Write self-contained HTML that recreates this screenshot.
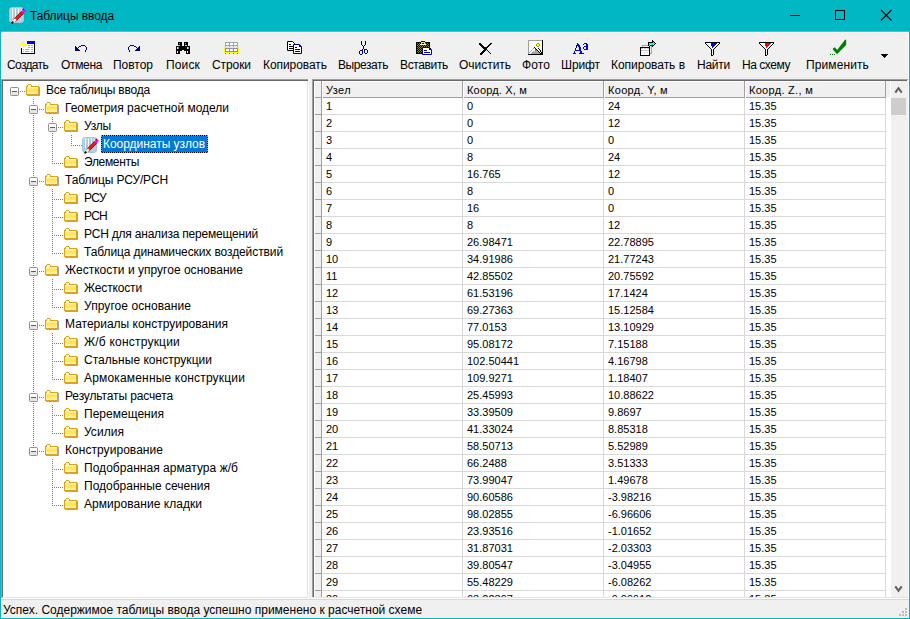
<!DOCTYPE html><html><head><meta charset="utf-8"><style>
*{margin:0;padding:0;box-sizing:border-box}
html,body{width:910px;height:619px;overflow:hidden;background:#F0F0F0;font-family:"Liberation Sans", sans-serif;position:relative}
.a{position:absolute}
.t{position:absolute;white-space:pre;color:#000}
.dh{position:absolute;height:1px;background:repeating-linear-gradient(to right,#7A7A7A 0 1px,transparent 1px 2px)}
.dv{position:absolute;width:1px;background:repeating-linear-gradient(to bottom,#7A7A7A 0 1px,transparent 1px 2px)}
</style></head><body>
<div class="a" style="left:0;top:0;width:910px;height:31px;background:#00B7C3"></div>
<div class="a" style="left:0;top:0;width:1px;height:619px;background:#00B7C3"></div>
<div class="a" style="left:909px;top:0;width:1px;height:619px;background:#00B7C3"></div>
<div class="a" style="left:0;top:618px;width:910px;height:1px;background:#00B7C3"></div>
<svg class="a" style="left:9px;top:7px" width="18" height="17"><rect x="0.5" y="0.5" width="14" height="15" rx="2.5" fill="#B0D2E5" stroke="#9FC6DB"/><path d="M1 2.5Q1 1 2.5 1H12L1 12Z" fill="#D2E7F2" opacity="0.7"/><path d="M3.5 1.5v10M6.5 1.5v10M9.5 1.5v10M12 1.5v8" stroke="#F4FAFD" stroke-width="1.1"/><path d="M2.2 2v10M5 1.5v10M8 1.5v10M11 1.5v9" stroke="#86B3CD" stroke-width="0.8"/><path d="M5.5 13.5 L13.8 5.2" stroke="#700000" stroke-width="3.4"/><path d="M5.5 13.5 L13.8 5.2" stroke="#FF1818" stroke-width="2.1"/><path d="M4.2 14.8 L6.8 12.2" stroke="#EDEDED" stroke-width="2.6"/><path d="M13.5 5.5 L16 3" stroke="#FF00FF" stroke-width="2.8"/><path d="M13.6 3 L14.8 1.8" stroke="#A00000" stroke-width="1.4"/><path d="M2.6 16.4 L4.4 14.6" stroke="#000" stroke-width="1.5"/></svg>
<div class="a" style="left:790px;top:15px;width:10px;height:1px;background:#000"></div>
<div class="a" style="left:835px;top:10px;width:10px;height:10px;border:1px solid #000"></div>
<svg class="a" style="left:880px;top:9px" width="13" height="13" viewBox="0 0 13 13"><path d="M1 1L11.5 11.5M11.5 1L1 11.5" stroke="#000" stroke-width="1.1"/></svg>
<div class="a" style="left:1px;top:31px;width:908px;height:1px;background:#A0A0A0"></div>
<div class="a" style="left:1px;top:32px;width:908px;height:1px;background:#FFF"></div>
<div class="a" style="left:1px;top:32px;width:1px;height:47px;background:#FFF"></div>
<div class="a" style="left:908px;top:32px;width:1px;height:47px;background:#FFF"></div>
<svg class="a" style="left:0;top:0" width="910" height="80" viewBox="0 0 910 80"><rect x="21" y="44" width="13" height="9" fill="#FFFFFF" shape-rendering="crispEdges"/><rect x="27" y="41" width="8" height="3" fill="#0000FF" shape-rendering="crispEdges"/><rect x="34" y="44" width="1" height="10" fill="#000" shape-rendering="crispEdges"/><rect x="21" y="53" width="14" height="1" fill="#000" shape-rendering="crispEdges"/><rect x="21" y="48" width="1" height="6" fill="#000" shape-rendering="crispEdges"/><rect x="28" y="45" width="2" height="1" fill="#A8A8A8" shape-rendering="crispEdges"/><rect x="31" y="45" width="2" height="1" fill="#A8A8A8" shape-rendering="crispEdges"/><rect x="28" y="47" width="2" height="1" fill="#A8A8A8" shape-rendering="crispEdges"/><rect x="31" y="47" width="2" height="1" fill="#A8A8A8" shape-rendering="crispEdges"/><rect x="23" y="49" width="1" height="1" fill="#A8A8A8" shape-rendering="crispEdges"/><rect x="25" y="49" width="4" height="1" fill="#A8A8A8" shape-rendering="crispEdges"/><rect x="31" y="49" width="2" height="1" fill="#A8A8A8" shape-rendering="crispEdges"/><rect x="23" y="51" width="1" height="1" fill="#A8A8A8" shape-rendering="crispEdges"/><rect x="25" y="51" width="4" height="1" fill="#A8A8A8" shape-rendering="crispEdges"/><rect x="31" y="51" width="2" height="1" fill="#A8A8A8" shape-rendering="crispEdges"/><rect x="23" y="41" width="1" height="1" fill="#FFFF00" shape-rendering="crispEdges"/><rect x="23" y="42" width="1" height="1" fill="#FFFF00" shape-rendering="crispEdges"/><rect x="23" y="46" width="1" height="1" fill="#FFFF00" shape-rendering="crispEdges"/><rect x="23" y="47" width="1" height="1" fill="#FFFF00" shape-rendering="crispEdges"/><rect x="20" y="44" width="1" height="1" fill="#FFFF00" shape-rendering="crispEdges"/><rect x="21" y="44" width="1" height="1" fill="#FFFF00" shape-rendering="crispEdges"/><rect x="25" y="44" width="1" height="1" fill="#FFFF00" shape-rendering="crispEdges"/><rect x="26" y="44" width="1" height="1" fill="#FFFF00" shape-rendering="crispEdges"/><rect x="21" y="42" width="1" height="1" fill="#FFFF00" shape-rendering="crispEdges"/><rect x="25" y="42" width="1" height="1" fill="#FFFF00" shape-rendering="crispEdges"/><rect x="21" y="46" width="1" height="1" fill="#FFFF00" shape-rendering="crispEdges"/><rect x="25" y="46" width="1" height="1" fill="#FFFF00" shape-rendering="crispEdges"/><rect x="22" y="43" width="3" height="3" fill="#FFFF00" shape-rendering="crispEdges"/><rect x="23" y="44" width="1" height="1" fill="#FFFFFF" shape-rendering="crispEdges"/><rect x="75" y="46" width="1" height="1" fill="#000080" shape-rendering="crispEdges"/><rect x="75" y="47" width="2" height="1" fill="#000080" shape-rendering="crispEdges"/><rect x="75" y="48" width="3" height="1" fill="#000080" shape-rendering="crispEdges"/><rect x="75" y="49" width="4" height="1" fill="#000080" shape-rendering="crispEdges"/><rect x="75" y="50" width="5" height="1" fill="#000080" shape-rendering="crispEdges"/><rect x="78" y="47" width="1" height="1" fill="#000080" shape-rendering="crispEdges"/><rect x="79" y="46" width="1" height="1" fill="#000080" shape-rendering="crispEdges"/><rect x="80" y="46" width="1" height="1" fill="#000080" shape-rendering="crispEdges"/><rect x="81" y="45" width="1" height="1" fill="#000080" shape-rendering="crispEdges"/><rect x="82" y="45" width="1" height="1" fill="#000080" shape-rendering="crispEdges"/><rect x="83" y="45" width="1" height="1" fill="#000080" shape-rendering="crispEdges"/><rect x="84" y="45" width="1" height="1" fill="#000080" shape-rendering="crispEdges"/><rect x="85" y="46" width="1" height="1" fill="#000080" shape-rendering="crispEdges"/><rect x="86" y="47" width="1" height="1" fill="#000080" shape-rendering="crispEdges"/><rect x="86" y="48" width="1" height="1" fill="#000080" shape-rendering="crispEdges"/><rect x="86" y="49" width="1" height="1" fill="#000080" shape-rendering="crispEdges"/><rect x="85" y="50" width="1" height="1" fill="#000080" shape-rendering="crispEdges"/><rect x="85" y="51" width="1" height="1" fill="#000080" shape-rendering="crispEdges"/><rect x="139" y="46" width="1" height="1" fill="#000080" shape-rendering="crispEdges"/><rect x="138" y="47" width="2" height="1" fill="#000080" shape-rendering="crispEdges"/><rect x="137" y="48" width="3" height="1" fill="#000080" shape-rendering="crispEdges"/><rect x="136" y="49" width="4" height="1" fill="#000080" shape-rendering="crispEdges"/><rect x="135" y="50" width="5" height="1" fill="#000080" shape-rendering="crispEdges"/><rect x="136" y="47" width="1" height="1" fill="#000080" shape-rendering="crispEdges"/><rect x="135" y="46" width="1" height="1" fill="#000080" shape-rendering="crispEdges"/><rect x="134" y="46" width="1" height="1" fill="#000080" shape-rendering="crispEdges"/><rect x="133" y="45" width="1" height="1" fill="#000080" shape-rendering="crispEdges"/><rect x="132" y="45" width="1" height="1" fill="#000080" shape-rendering="crispEdges"/><rect x="131" y="45" width="1" height="1" fill="#000080" shape-rendering="crispEdges"/><rect x="130" y="45" width="1" height="1" fill="#000080" shape-rendering="crispEdges"/><rect x="129" y="46" width="1" height="1" fill="#000080" shape-rendering="crispEdges"/><rect x="128" y="47" width="1" height="1" fill="#000080" shape-rendering="crispEdges"/><rect x="128" y="48" width="1" height="1" fill="#000080" shape-rendering="crispEdges"/><rect x="128" y="49" width="1" height="1" fill="#000080" shape-rendering="crispEdges"/><rect x="129" y="50" width="1" height="1" fill="#000080" shape-rendering="crispEdges"/><rect x="129" y="51" width="1" height="1" fill="#000080" shape-rendering="crispEdges"/><rect x="178" y="42" width="4" height="4" fill="#000" shape-rendering="crispEdges"/><rect x="184" y="42" width="4" height="4" fill="#000" shape-rendering="crispEdges"/><rect x="176" y="46" width="14" height="4" fill="#000" shape-rendering="crispEdges"/><rect x="176" y="50" width="4" height="4" fill="#000" shape-rendering="crispEdges"/><rect x="186" y="50" width="4" height="4" fill="#000" shape-rendering="crispEdges"/><rect x="180" y="50" width="6" height="1" fill="#000" shape-rendering="crispEdges"/><rect x="179" y="43" width="1" height="1" fill="#909090" shape-rendering="crispEdges"/><rect x="185" y="43" width="1" height="1" fill="#909090" shape-rendering="crispEdges"/><rect x="178" y="45" width="2" height="1" fill="#D8D8D8" shape-rendering="crispEdges"/><rect x="185" y="45" width="2" height="1" fill="#D8D8D8" shape-rendering="crispEdges"/><rect x="177" y="47" width="1" height="2" fill="#FFFFFF" shape-rendering="crispEdges"/><rect x="178" y="47" width="1" height="2" fill="#808080" shape-rendering="crispEdges"/><rect x="177" y="51" width="1" height="2" fill="#FFFFFF" shape-rendering="crispEdges"/><rect x="187" y="47" width="1" height="2" fill="#FFFFFF" shape-rendering="crispEdges"/><rect x="188" y="47" width="1" height="2" fill="#808080" shape-rendering="crispEdges"/><rect x="187" y="51" width="1" height="2" fill="#FFFFFF" shape-rendering="crispEdges"/><rect x="182" y="50" width="2" height="1" fill="#F0F0F0" shape-rendering="crispEdges"/><rect x="225" y="42" width="13" height="4" fill="#A4A4A4" shape-rendering="crispEdges"/><rect x="226" y="43" width="3" height="2" fill="#FFF" shape-rendering="crispEdges"/><rect x="230" y="43" width="3" height="2" fill="#FFF" shape-rendering="crispEdges"/><rect x="234" y="43" width="3" height="2" fill="#FFF" shape-rendering="crispEdges"/><rect x="225" y="46" width="1" height="1" fill="#A4A4A4" shape-rendering="crispEdges"/><rect x="229" y="46" width="1" height="1" fill="#A4A4A4" shape-rendering="crispEdges"/><rect x="233" y="46" width="1" height="1" fill="#A4A4A4" shape-rendering="crispEdges"/><rect x="237" y="46" width="1" height="1" fill="#A4A4A4" shape-rendering="crispEdges"/><rect x="224" y="47" width="15" height="6" fill="#FFFF00" shape-rendering="crispEdges"/><rect x="225" y="48" width="13" height="4" fill="#8C8CB4" shape-rendering="crispEdges"/><rect x="226" y="49" width="3" height="2" fill="#FFF" shape-rendering="crispEdges"/><rect x="230" y="49" width="3" height="2" fill="#FFF" shape-rendering="crispEdges"/><rect x="234" y="49" width="3" height="2" fill="#FFF" shape-rendering="crispEdges"/><rect x="225" y="53" width="1" height="1" fill="#707070" shape-rendering="crispEdges"/><rect x="229" y="53" width="1" height="1" fill="#707070" shape-rendering="crispEdges"/><rect x="233" y="53" width="1" height="1" fill="#707070" shape-rendering="crispEdges"/><rect x="237" y="53" width="1" height="1" fill="#707070" shape-rendering="crispEdges"/><path d="M287.5 41.5H292.5L294.5 43.5V50.5H287.5Z" fill="#FFF" stroke="#000"/><rect x="289" y="44" width="2" height="1" fill="#000" shape-rendering="crispEdges"/><rect x="289" y="46" width="4" height="1" fill="#000" shape-rendering="crispEdges"/><rect x="289" y="48" width="4" height="1" fill="#000" shape-rendering="crispEdges"/><path d="M293.5 44.5H299.5L301.5 46.5V53.5H293.5Z" fill="#FFF" stroke="#000080"/><rect x="299" y="45" width="1" height="2" fill="#000080" shape-rendering="crispEdges"/><rect x="300" y="46" width="1" height="1" fill="#000080" shape-rendering="crispEdges"/><rect x="295" y="47" width="2" height="1" fill="#000080" shape-rendering="crispEdges"/><rect x="295" y="49" width="5" height="1" fill="#000080" shape-rendering="crispEdges"/><rect x="295" y="51" width="5" height="1" fill="#000080" shape-rendering="crispEdges"/><rect x="361" y="41" width="1" height="1" fill="#000" shape-rendering="crispEdges"/><rect x="361" y="42" width="1" height="1" fill="#000" shape-rendering="crispEdges"/><rect x="361" y="43" width="1" height="1" fill="#000" shape-rendering="crispEdges"/><rect x="361" y="44" width="1" height="1" fill="#000" shape-rendering="crispEdges"/><rect x="362" y="45" width="1" height="1" fill="#000" shape-rendering="crispEdges"/><rect x="363" y="46" width="1" height="1" fill="#000" shape-rendering="crispEdges"/><rect x="365" y="41" width="1" height="1" fill="#000" shape-rendering="crispEdges"/><rect x="365" y="42" width="1" height="1" fill="#000" shape-rendering="crispEdges"/><rect x="365" y="43" width="1" height="1" fill="#000" shape-rendering="crispEdges"/><rect x="365" y="44" width="1" height="1" fill="#000" shape-rendering="crispEdges"/><rect x="364" y="45" width="1" height="1" fill="#000" shape-rendering="crispEdges"/><rect x="363" y="47" width="1" height="1" fill="#000" shape-rendering="crispEdges"/><rect x="363" y="48" width="1" height="1" fill="#000" shape-rendering="crispEdges"/><rect x="359" y="51" width="1" height="1" fill="#000080" shape-rendering="crispEdges"/><rect x="359" y="52" width="1" height="1" fill="#000080" shape-rendering="crispEdges"/><rect x="359" y="53" width="1" height="1" fill="#000080" shape-rendering="crispEdges"/><rect x="360" y="50" width="1" height="1" fill="#000080" shape-rendering="crispEdges"/><rect x="361" y="50" width="1" height="1" fill="#000080" shape-rendering="crispEdges"/><rect x="360" y="54" width="1" height="1" fill="#000080" shape-rendering="crispEdges"/><rect x="361" y="54" width="1" height="1" fill="#000080" shape-rendering="crispEdges"/><rect x="362" y="50" width="1" height="1" fill="#000080" shape-rendering="crispEdges"/><rect x="362" y="51" width="1" height="1" fill="#000080" shape-rendering="crispEdges"/><rect x="362" y="52" width="1" height="1" fill="#000080" shape-rendering="crispEdges"/><rect x="362" y="53" width="1" height="1" fill="#000080" shape-rendering="crispEdges"/><rect x="362" y="49" width="1" height="1" fill="#000080" shape-rendering="crispEdges"/><rect x="364" y="49" width="1" height="1" fill="#000080" shape-rendering="crispEdges"/><rect x="364" y="50" width="1" height="1" fill="#000080" shape-rendering="crispEdges"/><rect x="364" y="51" width="1" height="1" fill="#000080" shape-rendering="crispEdges"/><rect x="364" y="52" width="1" height="1" fill="#000080" shape-rendering="crispEdges"/><rect x="365" y="49" width="1" height="1" fill="#000080" shape-rendering="crispEdges"/><rect x="366" y="49" width="1" height="1" fill="#000080" shape-rendering="crispEdges"/><rect x="367" y="50" width="1" height="1" fill="#000080" shape-rendering="crispEdges"/><rect x="367" y="51" width="1" height="1" fill="#000080" shape-rendering="crispEdges"/><rect x="367" y="52" width="1" height="1" fill="#000080" shape-rendering="crispEdges"/><rect x="365" y="53" width="1" height="1" fill="#000080" shape-rendering="crispEdges"/><rect x="366" y="53" width="1" height="1" fill="#000080" shape-rendering="crispEdges"/><rect x="416" y="42" width="14" height="12" fill="#000" shape-rendering="crispEdges"/><rect x="417" y="43" width="1" height="1" fill="#808000" shape-rendering="crispEdges"/><rect x="419" y="43" width="1" height="1" fill="#808000" shape-rendering="crispEdges"/><rect x="421" y="43" width="1" height="1" fill="#808000" shape-rendering="crispEdges"/><rect x="423" y="43" width="1" height="1" fill="#808000" shape-rendering="crispEdges"/><rect x="425" y="43" width="1" height="1" fill="#808000" shape-rendering="crispEdges"/><rect x="427" y="43" width="1" height="1" fill="#808000" shape-rendering="crispEdges"/><rect x="418" y="44" width="1" height="1" fill="#808000" shape-rendering="crispEdges"/><rect x="420" y="44" width="1" height="1" fill="#808000" shape-rendering="crispEdges"/><rect x="422" y="44" width="1" height="1" fill="#808000" shape-rendering="crispEdges"/><rect x="424" y="44" width="1" height="1" fill="#808000" shape-rendering="crispEdges"/><rect x="426" y="44" width="1" height="1" fill="#808000" shape-rendering="crispEdges"/><rect x="428" y="44" width="1" height="1" fill="#808000" shape-rendering="crispEdges"/><rect x="417" y="45" width="1" height="1" fill="#808000" shape-rendering="crispEdges"/><rect x="419" y="45" width="1" height="1" fill="#808000" shape-rendering="crispEdges"/><rect x="421" y="45" width="1" height="1" fill="#808000" shape-rendering="crispEdges"/><rect x="423" y="45" width="1" height="1" fill="#808000" shape-rendering="crispEdges"/><rect x="425" y="45" width="1" height="1" fill="#808000" shape-rendering="crispEdges"/><rect x="427" y="45" width="1" height="1" fill="#808000" shape-rendering="crispEdges"/><rect x="418" y="46" width="1" height="1" fill="#808000" shape-rendering="crispEdges"/><rect x="420" y="46" width="1" height="1" fill="#808000" shape-rendering="crispEdges"/><rect x="422" y="46" width="1" height="1" fill="#808000" shape-rendering="crispEdges"/><rect x="424" y="46" width="1" height="1" fill="#808000" shape-rendering="crispEdges"/><rect x="426" y="46" width="1" height="1" fill="#808000" shape-rendering="crispEdges"/><rect x="428" y="46" width="1" height="1" fill="#808000" shape-rendering="crispEdges"/><rect x="417" y="47" width="1" height="1" fill="#808000" shape-rendering="crispEdges"/><rect x="419" y="47" width="1" height="1" fill="#808000" shape-rendering="crispEdges"/><rect x="421" y="47" width="1" height="1" fill="#808000" shape-rendering="crispEdges"/><rect x="423" y="47" width="1" height="1" fill="#808000" shape-rendering="crispEdges"/><rect x="425" y="47" width="1" height="1" fill="#808000" shape-rendering="crispEdges"/><rect x="427" y="47" width="1" height="1" fill="#808000" shape-rendering="crispEdges"/><rect x="418" y="48" width="1" height="1" fill="#808000" shape-rendering="crispEdges"/><rect x="420" y="48" width="1" height="1" fill="#808000" shape-rendering="crispEdges"/><rect x="422" y="48" width="1" height="1" fill="#808000" shape-rendering="crispEdges"/><rect x="424" y="48" width="1" height="1" fill="#808000" shape-rendering="crispEdges"/><rect x="426" y="48" width="1" height="1" fill="#808000" shape-rendering="crispEdges"/><rect x="428" y="48" width="1" height="1" fill="#808000" shape-rendering="crispEdges"/><rect x="417" y="49" width="1" height="1" fill="#808000" shape-rendering="crispEdges"/><rect x="419" y="49" width="1" height="1" fill="#808000" shape-rendering="crispEdges"/><rect x="421" y="49" width="1" height="1" fill="#808000" shape-rendering="crispEdges"/><rect x="423" y="49" width="1" height="1" fill="#808000" shape-rendering="crispEdges"/><rect x="425" y="49" width="1" height="1" fill="#808000" shape-rendering="crispEdges"/><rect x="427" y="49" width="1" height="1" fill="#808000" shape-rendering="crispEdges"/><rect x="418" y="50" width="1" height="1" fill="#808000" shape-rendering="crispEdges"/><rect x="420" y="50" width="1" height="1" fill="#808000" shape-rendering="crispEdges"/><rect x="422" y="50" width="1" height="1" fill="#808000" shape-rendering="crispEdges"/><rect x="424" y="50" width="1" height="1" fill="#808000" shape-rendering="crispEdges"/><rect x="426" y="50" width="1" height="1" fill="#808000" shape-rendering="crispEdges"/><rect x="428" y="50" width="1" height="1" fill="#808000" shape-rendering="crispEdges"/><rect x="417" y="51" width="1" height="1" fill="#808000" shape-rendering="crispEdges"/><rect x="419" y="51" width="1" height="1" fill="#808000" shape-rendering="crispEdges"/><rect x="421" y="51" width="1" height="1" fill="#808000" shape-rendering="crispEdges"/><rect x="423" y="51" width="1" height="1" fill="#808000" shape-rendering="crispEdges"/><rect x="425" y="51" width="1" height="1" fill="#808000" shape-rendering="crispEdges"/><rect x="427" y="51" width="1" height="1" fill="#808000" shape-rendering="crispEdges"/><rect x="418" y="52" width="1" height="1" fill="#808000" shape-rendering="crispEdges"/><rect x="420" y="52" width="1" height="1" fill="#808000" shape-rendering="crispEdges"/><rect x="422" y="52" width="1" height="1" fill="#808000" shape-rendering="crispEdges"/><rect x="424" y="52" width="1" height="1" fill="#808000" shape-rendering="crispEdges"/><rect x="426" y="52" width="1" height="1" fill="#808000" shape-rendering="crispEdges"/><rect x="428" y="52" width="1" height="1" fill="#808000" shape-rendering="crispEdges"/><rect x="421" y="41" width="4" height="1" fill="#000" shape-rendering="crispEdges"/><rect x="421" y="42" width="4" height="2" fill="#FFFF00" shape-rendering="crispEdges"/><rect x="422" y="43" width="2" height="1" fill="#000" shape-rendering="crispEdges"/><rect x="420" y="44" width="6" height="1" fill="#FFFFFF" shape-rendering="crispEdges"/><path d="M422.5 47.5H429.5L431.5 49.5V54.5H422.5Z" fill="#FFF" stroke="#000080"/><rect x="429" y="48" width="1" height="2" fill="#000080" shape-rendering="crispEdges"/><rect x="430" y="49" width="1" height="1" fill="#000080" shape-rendering="crispEdges"/><rect x="424" y="50" width="3" height="1" fill="#000080" shape-rendering="crispEdges"/><rect x="424" y="52" width="6" height="1" fill="#000080" shape-rendering="crispEdges"/><rect x="479" y="43" width="1" height="1" fill="#000" shape-rendering="crispEdges"/><rect x="480" y="43" width="1" height="1" fill="#000" shape-rendering="crispEdges"/><rect x="490" y="43" width="1" height="1" fill="#000" shape-rendering="crispEdges"/><rect x="491" y="43" width="1" height="1" fill="#000" shape-rendering="crispEdges"/><rect x="479" y="44" width="1" height="1" fill="#000" shape-rendering="crispEdges"/><rect x="480" y="44" width="1" height="1" fill="#000" shape-rendering="crispEdges"/><rect x="481" y="44" width="1" height="1" fill="#000" shape-rendering="crispEdges"/><rect x="489" y="44" width="1" height="1" fill="#000" shape-rendering="crispEdges"/><rect x="490" y="44" width="1" height="1" fill="#000" shape-rendering="crispEdges"/><rect x="480" y="45" width="1" height="1" fill="#000" shape-rendering="crispEdges"/><rect x="481" y="45" width="1" height="1" fill="#000" shape-rendering="crispEdges"/><rect x="482" y="45" width="1" height="1" fill="#000" shape-rendering="crispEdges"/><rect x="488" y="45" width="1" height="1" fill="#000" shape-rendering="crispEdges"/><rect x="489" y="45" width="1" height="1" fill="#000" shape-rendering="crispEdges"/><rect x="481" y="46" width="1" height="1" fill="#000" shape-rendering="crispEdges"/><rect x="482" y="46" width="1" height="1" fill="#000" shape-rendering="crispEdges"/><rect x="483" y="46" width="1" height="1" fill="#000" shape-rendering="crispEdges"/><rect x="487" y="46" width="1" height="1" fill="#000" shape-rendering="crispEdges"/><rect x="488" y="46" width="1" height="1" fill="#000" shape-rendering="crispEdges"/><rect x="482" y="47" width="1" height="1" fill="#000" shape-rendering="crispEdges"/><rect x="483" y="47" width="1" height="1" fill="#000" shape-rendering="crispEdges"/><rect x="484" y="47" width="1" height="1" fill="#000" shape-rendering="crispEdges"/><rect x="485" y="47" width="1" height="1" fill="#000" shape-rendering="crispEdges"/><rect x="486" y="47" width="1" height="1" fill="#000" shape-rendering="crispEdges"/><rect x="487" y="47" width="1" height="1" fill="#000" shape-rendering="crispEdges"/><rect x="483" y="48" width="1" height="1" fill="#000" shape-rendering="crispEdges"/><rect x="484" y="48" width="1" height="1" fill="#000" shape-rendering="crispEdges"/><rect x="485" y="48" width="1" height="1" fill="#000" shape-rendering="crispEdges"/><rect x="486" y="48" width="1" height="1" fill="#000" shape-rendering="crispEdges"/><rect x="484" y="49" width="1" height="1" fill="#000" shape-rendering="crispEdges"/><rect x="485" y="49" width="1" height="1" fill="#000" shape-rendering="crispEdges"/><rect x="486" y="49" width="1" height="1" fill="#000" shape-rendering="crispEdges"/><rect x="483" y="50" width="1" height="1" fill="#000" shape-rendering="crispEdges"/><rect x="484" y="50" width="1" height="1" fill="#000" shape-rendering="crispEdges"/><rect x="485" y="50" width="1" height="1" fill="#000" shape-rendering="crispEdges"/><rect x="487" y="50" width="1" height="1" fill="#000" shape-rendering="crispEdges"/><rect x="482" y="51" width="1" height="1" fill="#000" shape-rendering="crispEdges"/><rect x="483" y="51" width="1" height="1" fill="#000" shape-rendering="crispEdges"/><rect x="484" y="51" width="1" height="1" fill="#000" shape-rendering="crispEdges"/><rect x="488" y="51" width="1" height="1" fill="#000" shape-rendering="crispEdges"/><rect x="481" y="52" width="1" height="1" fill="#000" shape-rendering="crispEdges"/><rect x="482" y="52" width="1" height="1" fill="#000" shape-rendering="crispEdges"/><rect x="483" y="52" width="1" height="1" fill="#000" shape-rendering="crispEdges"/><rect x="489" y="52" width="1" height="1" fill="#000" shape-rendering="crispEdges"/><rect x="480" y="53" width="1" height="1" fill="#000" shape-rendering="crispEdges"/><rect x="481" y="53" width="1" height="1" fill="#000" shape-rendering="crispEdges"/><rect x="482" y="53" width="1" height="1" fill="#000" shape-rendering="crispEdges"/><rect x="490" y="53" width="1" height="1" fill="#000" shape-rendering="crispEdges"/><rect x="480" y="54" width="1" height="1" fill="#000" shape-rendering="crispEdges"/><rect x="481" y="54" width="1" height="1" fill="#000" shape-rendering="crispEdges"/><rect x="528" y="40" width="15" height="15" fill="#FFFFFF" shape-rendering="crispEdges"/><rect x="528" y="40" width="14" height="1" fill="#A0A0A0" shape-rendering="crispEdges"/><rect x="528" y="40" width="1" height="14" fill="#A0A0A0" shape-rendering="crispEdges"/><rect x="542" y="40" width="1" height="15" fill="#000" shape-rendering="crispEdges"/><rect x="528" y="54" width="15" height="1" fill="#000" shape-rendering="crispEdges"/><rect x="533" y="51" width="5" height="1" fill="#B4B4B4" shape-rendering="crispEdges"/><rect x="532" y="52" width="7" height="1" fill="#A8A8A8" shape-rendering="crispEdges"/><rect x="531" y="53" width="9" height="1" fill="#A0A0A0" shape-rendering="crispEdges"/><rect x="533" y="48" width="1" height="1" fill="#A0A0A0" shape-rendering="crispEdges"/><rect x="531" y="50" width="1" height="1" fill="#A0A0A0" shape-rendering="crispEdges"/><rect x="529" y="52" width="1" height="1" fill="#A0A0A0" shape-rendering="crispEdges"/><rect x="532" y="49" width="1" height="1" fill="#D0D0D0" shape-rendering="crispEdges"/><rect x="530" y="51" width="1" height="1" fill="#D0D0D0" shape-rendering="crispEdges"/><rect x="534" y="47" width="1" height="1" fill="#000" shape-rendering="crispEdges"/><rect x="535" y="48" width="1" height="1" fill="#000" shape-rendering="crispEdges"/><rect x="536" y="49" width="1" height="1" fill="#000" shape-rendering="crispEdges"/><rect x="537" y="50" width="1" height="1" fill="#000" shape-rendering="crispEdges"/><rect x="538" y="51" width="1" height="1" fill="#000" shape-rendering="crispEdges"/><rect x="539" y="52" width="1" height="1" fill="#000" shape-rendering="crispEdges"/><rect x="540" y="53" width="1" height="1" fill="#000" shape-rendering="crispEdges"/><rect x="538" y="48" width="1" height="1" fill="#000" shape-rendering="crispEdges"/><rect x="539" y="49" width="1" height="1" fill="#000" shape-rendering="crispEdges"/><rect x="540" y="50" width="1" height="1" fill="#000" shape-rendering="crispEdges"/><rect x="540" y="51" width="1" height="1" fill="#000" shape-rendering="crispEdges"/><rect x="541" y="52" width="1" height="1" fill="#000" shape-rendering="crispEdges"/><rect x="541" y="53" width="1" height="1" fill="#000" shape-rendering="crispEdges"/><rect x="535" y="49" width="1" height="2" fill="#808000" shape-rendering="crispEdges"/><rect x="536" y="50" width="1" height="1" fill="#A0A000" shape-rendering="crispEdges"/><rect x="537" y="44" width="2" height="2" fill="#FFFF00" shape-rendering="crispEdges"/><rect x="537" y="43" width="1" height="1" fill="#A0A000" shape-rendering="crispEdges"/><rect x="538" y="43" width="1" height="1" fill="#A0A000" shape-rendering="crispEdges"/><rect x="536" y="44" width="1" height="1" fill="#A0A000" shape-rendering="crispEdges"/><rect x="536" y="45" width="1" height="1" fill="#A0A000" shape-rendering="crispEdges"/><rect x="539" y="44" width="1" height="1" fill="#A0A000" shape-rendering="crispEdges"/><rect x="539" y="45" width="1" height="1" fill="#A0A000" shape-rendering="crispEdges"/><rect x="537" y="46" width="1" height="1" fill="#A0A000" shape-rendering="crispEdges"/><rect x="538" y="46" width="1" height="1" fill="#A0A000" shape-rendering="crispEdges"/><rect x="577" y="43" width="1" height="1" fill="#0000F0" shape-rendering="crispEdges"/><rect x="577" y="44" width="1" height="1" fill="#0000F0" shape-rendering="crispEdges"/><rect x="578" y="44" width="1" height="1" fill="#0000F0" shape-rendering="crispEdges"/><rect x="576" y="45" width="1" height="1" fill="#0000F0" shape-rendering="crispEdges"/><rect x="577" y="45" width="1" height="1" fill="#0000F0" shape-rendering="crispEdges"/><rect x="578" y="45" width="1" height="1" fill="#0000F0" shape-rendering="crispEdges"/><rect x="579" y="45" width="1" height="1" fill="#0000F0" shape-rendering="crispEdges"/><rect x="576" y="46" width="1" height="1" fill="#0000F0" shape-rendering="crispEdges"/><rect x="578" y="46" width="1" height="1" fill="#0000F0" shape-rendering="crispEdges"/><rect x="579" y="46" width="1" height="1" fill="#0000F0" shape-rendering="crispEdges"/><rect x="576" y="47" width="1" height="1" fill="#0000F0" shape-rendering="crispEdges"/><rect x="579" y="47" width="1" height="1" fill="#0000F0" shape-rendering="crispEdges"/><rect x="580" y="47" width="1" height="1" fill="#0000F0" shape-rendering="crispEdges"/><rect x="575" y="48" width="1" height="1" fill="#0000F0" shape-rendering="crispEdges"/><rect x="579" y="48" width="1" height="1" fill="#0000F0" shape-rendering="crispEdges"/><rect x="580" y="48" width="1" height="1" fill="#0000F0" shape-rendering="crispEdges"/><rect x="575" y="49" width="1" height="1" fill="#0000F0" shape-rendering="crispEdges"/><rect x="579" y="49" width="1" height="1" fill="#0000F0" shape-rendering="crispEdges"/><rect x="580" y="49" width="1" height="1" fill="#0000F0" shape-rendering="crispEdges"/><rect x="575" y="50" width="1" height="1" fill="#0000F0" shape-rendering="crispEdges"/><rect x="576" y="50" width="1" height="1" fill="#0000F0" shape-rendering="crispEdges"/><rect x="577" y="50" width="1" height="1" fill="#0000F0" shape-rendering="crispEdges"/><rect x="578" y="50" width="1" height="1" fill="#0000F0" shape-rendering="crispEdges"/><rect x="579" y="50" width="1" height="1" fill="#0000F0" shape-rendering="crispEdges"/><rect x="580" y="50" width="1" height="1" fill="#0000F0" shape-rendering="crispEdges"/><rect x="574" y="51" width="1" height="1" fill="#0000F0" shape-rendering="crispEdges"/><rect x="580" y="51" width="1" height="1" fill="#0000F0" shape-rendering="crispEdges"/><rect x="581" y="51" width="1" height="1" fill="#0000F0" shape-rendering="crispEdges"/><rect x="574" y="52" width="1" height="1" fill="#0000F0" shape-rendering="crispEdges"/><rect x="580" y="52" width="1" height="1" fill="#0000F0" shape-rendering="crispEdges"/><rect x="581" y="52" width="1" height="1" fill="#0000F0" shape-rendering="crispEdges"/><rect x="573" y="53" width="1" height="1" fill="#0000F0" shape-rendering="crispEdges"/><rect x="574" y="53" width="1" height="1" fill="#0000F0" shape-rendering="crispEdges"/><rect x="575" y="53" width="1" height="1" fill="#0000F0" shape-rendering="crispEdges"/><rect x="579" y="53" width="1" height="1" fill="#0000F0" shape-rendering="crispEdges"/><rect x="580" y="53" width="1" height="1" fill="#0000F0" shape-rendering="crispEdges"/><rect x="581" y="53" width="1" height="1" fill="#0000F0" shape-rendering="crispEdges"/><rect x="582" y="53" width="1" height="1" fill="#0000F0" shape-rendering="crispEdges"/><rect x="583" y="53" width="1" height="1" fill="#0000F0" shape-rendering="crispEdges"/><rect x="584" y="43" width="1" height="1" fill="#0000F0" shape-rendering="crispEdges"/><rect x="585" y="43" width="1" height="1" fill="#0000F0" shape-rendering="crispEdges"/><rect x="586" y="43" width="1" height="1" fill="#0000F0" shape-rendering="crispEdges"/><rect x="583" y="44" width="1" height="1" fill="#0000F0" shape-rendering="crispEdges"/><rect x="586" y="44" width="1" height="1" fill="#0000F0" shape-rendering="crispEdges"/><rect x="587" y="44" width="1" height="1" fill="#0000F0" shape-rendering="crispEdges"/><rect x="586" y="45" width="1" height="1" fill="#0000F0" shape-rendering="crispEdges"/><rect x="587" y="45" width="1" height="1" fill="#0000F0" shape-rendering="crispEdges"/><rect x="584" y="46" width="1" height="1" fill="#0000F0" shape-rendering="crispEdges"/><rect x="585" y="46" width="1" height="1" fill="#0000F0" shape-rendering="crispEdges"/><rect x="586" y="46" width="1" height="1" fill="#0000F0" shape-rendering="crispEdges"/><rect x="587" y="46" width="1" height="1" fill="#0000F0" shape-rendering="crispEdges"/><rect x="583" y="47" width="1" height="1" fill="#0000F0" shape-rendering="crispEdges"/><rect x="586" y="47" width="1" height="1" fill="#0000F0" shape-rendering="crispEdges"/><rect x="587" y="47" width="1" height="1" fill="#0000F0" shape-rendering="crispEdges"/><rect x="583" y="48" width="1" height="1" fill="#0000F0" shape-rendering="crispEdges"/><rect x="586" y="48" width="1" height="1" fill="#0000F0" shape-rendering="crispEdges"/><rect x="587" y="48" width="1" height="1" fill="#0000F0" shape-rendering="crispEdges"/><rect x="584" y="49" width="1" height="1" fill="#0000F0" shape-rendering="crispEdges"/><rect x="585" y="49" width="1" height="1" fill="#0000F0" shape-rendering="crispEdges"/><rect x="586" y="49" width="1" height="1" fill="#0000F0" shape-rendering="crispEdges"/><rect x="587" y="49" width="1" height="1" fill="#0000F0" shape-rendering="crispEdges"/><rect x="642.5" y="45.5" width="9" height="8" fill="none" stroke="#A8A8A8"/><rect x="640" y="47" width="10" height="9" fill="#000" shape-rendering="crispEdges"/><rect x="641" y="48" width="8" height="7" fill="#FFFFFF" shape-rendering="crispEdges"/><rect x="641" y="48" width="2" height="1" fill="#C8C8C8" shape-rendering="crispEdges"/><rect x="644" y="48" width="2" height="1" fill="#C8C8C8" shape-rendering="crispEdges"/><rect x="647" y="48" width="2" height="1" fill="#C8C8C8" shape-rendering="crispEdges"/><rect x="641" y="50" width="8" height="1" fill="#C8C8C8" shape-rendering="crispEdges"/><rect x="642" y="52" width="6" height="1" fill="#E0E0E0" shape-rendering="crispEdges"/><rect x="652" y="40" width="1" height="1" fill="#000" shape-rendering="crispEdges"/><rect x="652" y="41" width="1" height="1" fill="#000" shape-rendering="crispEdges"/><rect x="653" y="41" width="1" height="1" fill="#000" shape-rendering="crispEdges"/><rect x="648" y="42" width="1" height="1" fill="#000" shape-rendering="crispEdges"/><rect x="649" y="42" width="1" height="1" fill="#000" shape-rendering="crispEdges"/><rect x="650" y="42" width="1" height="1" fill="#000" shape-rendering="crispEdges"/><rect x="651" y="42" width="1" height="1" fill="#000" shape-rendering="crispEdges"/><rect x="652" y="42" width="1" height="1" fill="#000" shape-rendering="crispEdges"/><rect x="654" y="42" width="1" height="1" fill="#000" shape-rendering="crispEdges"/><rect x="648" y="43" width="1" height="1" fill="#000" shape-rendering="crispEdges"/><rect x="655" y="43" width="1" height="1" fill="#000" shape-rendering="crispEdges"/><rect x="648" y="44" width="1" height="1" fill="#000" shape-rendering="crispEdges"/><rect x="654" y="44" width="1" height="1" fill="#000" shape-rendering="crispEdges"/><rect x="648" y="45" width="1" height="1" fill="#000" shape-rendering="crispEdges"/><rect x="650" y="45" width="1" height="1" fill="#000" shape-rendering="crispEdges"/><rect x="651" y="45" width="1" height="1" fill="#000" shape-rendering="crispEdges"/><rect x="652" y="45" width="1" height="1" fill="#000" shape-rendering="crispEdges"/><rect x="653" y="45" width="1" height="1" fill="#000" shape-rendering="crispEdges"/><rect x="649" y="46" width="1" height="1" fill="#000" shape-rendering="crispEdges"/><rect x="652" y="46" width="1" height="1" fill="#000" shape-rendering="crispEdges"/><rect x="653" y="42" width="1" height="1" fill="#00FFFF" shape-rendering="crispEdges"/><rect x="649" y="43" width="1" height="1" fill="#00FFFF" shape-rendering="crispEdges"/><rect x="650" y="43" width="1" height="1" fill="#00FFFF" shape-rendering="crispEdges"/><rect x="651" y="43" width="1" height="1" fill="#00FFFF" shape-rendering="crispEdges"/><rect x="652" y="43" width="1" height="1" fill="#00FFFF" shape-rendering="crispEdges"/><rect x="653" y="43" width="1" height="1" fill="#00FFFF" shape-rendering="crispEdges"/><rect x="654" y="43" width="1" height="1" fill="#00FFFF" shape-rendering="crispEdges"/><rect x="649" y="44" width="1" height="1" fill="#00FFFF" shape-rendering="crispEdges"/><rect x="650" y="44" width="1" height="1" fill="#00FFFF" shape-rendering="crispEdges"/><rect x="651" y="44" width="1" height="1" fill="#00FFFF" shape-rendering="crispEdges"/><rect x="652" y="44" width="1" height="1" fill="#00FFFF" shape-rendering="crispEdges"/><rect x="653" y="44" width="1" height="1" fill="#00FFFF" shape-rendering="crispEdges"/><rect x="649" y="45" width="1" height="1" fill="#00FFFF" shape-rendering="crispEdges"/><rect x="705" y="42" width="15" height="1" fill="#000" shape-rendering="crispEdges"/><rect x="705" y="43" width="1" height="1" fill="#000" shape-rendering="crispEdges"/><rect x="719" y="43" width="1" height="1" fill="#000" shape-rendering="crispEdges"/><rect x="706" y="43" width="13" height="1" fill="#FFFFFF" shape-rendering="crispEdges"/><rect x="707" y="44" width="11" height="1" fill="#FFFFFF" shape-rendering="crispEdges"/><rect x="708" y="45" width="9" height="1" fill="#FFFFFF" shape-rendering="crispEdges"/><rect x="709" y="46" width="7" height="1" fill="#FFFFFF" shape-rendering="crispEdges"/><rect x="710" y="47" width="5" height="1" fill="#FFFFFF" shape-rendering="crispEdges"/><rect x="711" y="48" width="3" height="1" fill="#FFFFFF" shape-rendering="crispEdges"/><rect x="706" y="44" width="1" height="1" fill="#000" shape-rendering="crispEdges"/><rect x="718" y="44" width="1" height="1" fill="#000" shape-rendering="crispEdges"/><rect x="707" y="45" width="1" height="1" fill="#000" shape-rendering="crispEdges"/><rect x="717" y="45" width="1" height="1" fill="#000" shape-rendering="crispEdges"/><rect x="708" y="46" width="1" height="1" fill="#000" shape-rendering="crispEdges"/><rect x="716" y="46" width="1" height="1" fill="#000" shape-rendering="crispEdges"/><rect x="709" y="47" width="1" height="1" fill="#000" shape-rendering="crispEdges"/><rect x="715" y="47" width="1" height="1" fill="#000" shape-rendering="crispEdges"/><rect x="710" y="48" width="1" height="1" fill="#000" shape-rendering="crispEdges"/><rect x="714" y="48" width="1" height="1" fill="#000" shape-rendering="crispEdges"/><rect x="711" y="49" width="1" height="1" fill="#000" shape-rendering="crispEdges"/><rect x="713" y="49" width="1" height="1" fill="#000" shape-rendering="crispEdges"/><rect x="711" y="49" width="1" height="6" fill="#000" shape-rendering="crispEdges"/><rect x="713" y="49" width="1" height="6" fill="#000" shape-rendering="crispEdges"/><rect x="712" y="49" width="1" height="6" fill="#FFFFFF" shape-rendering="crispEdges"/><rect x="711" y="55" width="2" height="1" fill="#000" shape-rendering="crispEdges"/><rect x="711" y="43" width="6" height="1" fill="#0000FF" shape-rendering="crispEdges"/><rect x="711" y="44" width="5" height="1" fill="#0000FF" shape-rendering="crispEdges"/><rect x="711" y="45" width="4" height="1" fill="#0000FF" shape-rendering="crispEdges"/><rect x="712" y="46" width="2" height="1" fill="#0000FF" shape-rendering="crispEdges"/><rect x="712" y="47" width="1" height="1" fill="#0000FF" shape-rendering="crispEdges"/><rect x="759" y="42" width="15" height="1" fill="#000" shape-rendering="crispEdges"/><rect x="759" y="43" width="1" height="1" fill="#000" shape-rendering="crispEdges"/><rect x="773" y="43" width="1" height="1" fill="#000" shape-rendering="crispEdges"/><rect x="760" y="43" width="13" height="1" fill="#FFFFFF" shape-rendering="crispEdges"/><rect x="761" y="44" width="11" height="1" fill="#FFFFFF" shape-rendering="crispEdges"/><rect x="762" y="45" width="9" height="1" fill="#FFFFFF" shape-rendering="crispEdges"/><rect x="763" y="46" width="7" height="1" fill="#FFFFFF" shape-rendering="crispEdges"/><rect x="764" y="47" width="5" height="1" fill="#FFFFFF" shape-rendering="crispEdges"/><rect x="765" y="48" width="3" height="1" fill="#FFFFFF" shape-rendering="crispEdges"/><rect x="760" y="44" width="1" height="1" fill="#000" shape-rendering="crispEdges"/><rect x="772" y="44" width="1" height="1" fill="#000" shape-rendering="crispEdges"/><rect x="761" y="45" width="1" height="1" fill="#000" shape-rendering="crispEdges"/><rect x="771" y="45" width="1" height="1" fill="#000" shape-rendering="crispEdges"/><rect x="762" y="46" width="1" height="1" fill="#000" shape-rendering="crispEdges"/><rect x="770" y="46" width="1" height="1" fill="#000" shape-rendering="crispEdges"/><rect x="763" y="47" width="1" height="1" fill="#000" shape-rendering="crispEdges"/><rect x="769" y="47" width="1" height="1" fill="#000" shape-rendering="crispEdges"/><rect x="764" y="48" width="1" height="1" fill="#000" shape-rendering="crispEdges"/><rect x="768" y="48" width="1" height="1" fill="#000" shape-rendering="crispEdges"/><rect x="765" y="49" width="1" height="1" fill="#000" shape-rendering="crispEdges"/><rect x="767" y="49" width="1" height="1" fill="#000" shape-rendering="crispEdges"/><rect x="765" y="49" width="1" height="6" fill="#000" shape-rendering="crispEdges"/><rect x="767" y="49" width="1" height="6" fill="#000" shape-rendering="crispEdges"/><rect x="766" y="49" width="1" height="6" fill="#FFFFFF" shape-rendering="crispEdges"/><rect x="765" y="55" width="2" height="1" fill="#000" shape-rendering="crispEdges"/><rect x="765" y="43" width="6" height="1" fill="#FF0000" shape-rendering="crispEdges"/><rect x="765" y="44" width="5" height="1" fill="#FF0000" shape-rendering="crispEdges"/><rect x="765" y="45" width="4" height="1" fill="#FF0000" shape-rendering="crispEdges"/><rect x="766" y="46" width="2" height="1" fill="#FF0000" shape-rendering="crispEdges"/><rect x="766" y="47" width="1" height="1" fill="#FF0000" shape-rendering="crispEdges"/><path d="M832.5 49L834.8 47.2L837.2 50L845 39.8H846.2V45L837 54.2Z" fill="#008000"/><rect x="830" y="54" width="1" height="1" fill="#008000" shape-rendering="crispEdges"/><rect x="832" y="54" width="1" height="1" fill="#008000" shape-rendering="crispEdges"/><rect x="834" y="54" width="1" height="1" fill="#008000" shape-rendering="crispEdges"/><rect x="881" y="54" width="7" height="1" fill="#000" shape-rendering="crispEdges"/><rect x="882" y="55" width="5" height="1" fill="#000" shape-rendering="crispEdges"/><rect x="883" y="56" width="3" height="1" fill="#000" shape-rendering="crispEdges"/><rect x="884" y="57" width="1" height="1" fill="#000" shape-rendering="crispEdges"/></svg>
<div class="a" style="left:1px;top:79px;width:308px;height:1px;background:#A0A0A0"></div>
<div class="a" style="left:1px;top:79px;width:1px;height:520px;background:#A0A0A0"></div>
<div class="a" style="left:2px;top:80px;width:306px;height:1px;background:#696969"></div>
<div class="a" style="left:2px;top:80px;width:1px;height:517px;background:#696969"></div>
<div class="a" style="left:3px;top:81px;width:304px;height:516px;background:#FFF"></div>
<div class="a" style="left:307px;top:81px;width:1px;height:517px;background:#E3E3E3"></div>
<div class="a" style="left:2px;top:597px;width:306px;height:1px;background:#E3E3E3"></div>
<div class="a" style="left:308px;top:79px;width:1px;height:520px;background:#FFF"></div>
<div class="a" style="left:1px;top:598px;width:308px;height:1px;background:#FFF"></div>
<div class="dv" style="left:33px;top:99px;height:353px"></div>
<div class="dv" style="left:52px;top:117px;height:47px"></div>
<div class="dv" style="left:71px;top:135px;height:11px"></div>
<div class="dv" style="left:52px;top:189px;height:65px"></div>
<div class="dv" style="left:52px;top:279px;height:29px"></div>
<div class="dv" style="left:52px;top:333px;height:47px"></div>
<div class="dv" style="left:52px;top:405px;height:29px"></div>
<div class="dv" style="left:52px;top:459px;height:47px"></div>
<div class="dh" style="left:14px;top:91px;width:12px"></div>
<svg class="a" style="left:10px;top:87px" width="9" height="9"><rect x="0.5" y="0.5" width="8" height="8" rx="1" fill="#FFFFFF" stroke="#8E8F8F"/><rect x="1" y="5" width="7" height="3" fill="#E6E6E6"/><rect x="2" y="4" width="5" height="1" fill="#3F5AA8"/></svg>
<svg class="a" style="left:26px;top:84px" width="15" height="13" shape-rendering="crispEdges"><rect x="13" y="3" width="1" height="9" fill="#A4A4AC"/><rect x="1" y="11" width="13" height="1" fill="#A4A4AC"/><rect x="0" y="2" width="13" height="9" fill="#D9A31E"/><rect x="1" y="3" width="11" height="1" fill="#FFF2AC"/><rect x="1" y="4" width="11" height="1" fill="#FFEB85"/><rect x="1" y="5" width="11" height="1" fill="#FFE35A"/><rect x="1" y="6" width="11" height="1" fill="#FFE35A"/><rect x="1" y="7" width="11" height="1" fill="#FFE676"/><rect x="1" y="8" width="11" height="1" fill="#FFEE95"/><rect x="1" y="9" width="11" height="1" fill="#FFF3AA"/><rect x="2" y="0" width="3" height="1" fill="#D9A31E"/><rect x="1" y="1" width="5" height="1" fill="#D9A31E"/><rect x="2" y="1" width="3" height="2" fill="#FFF7CC"/></svg>
<div class="dh" style="left:33px;top:109px;width:12px"></div>
<svg class="a" style="left:29px;top:105px" width="9" height="9"><rect x="0.5" y="0.5" width="8" height="8" rx="1" fill="#FFFFFF" stroke="#8E8F8F"/><rect x="1" y="5" width="7" height="3" fill="#E6E6E6"/><rect x="2" y="4" width="5" height="1" fill="#3F5AA8"/></svg>
<svg class="a" style="left:45px;top:102px" width="15" height="13" shape-rendering="crispEdges"><rect x="13" y="3" width="1" height="9" fill="#A4A4AC"/><rect x="1" y="11" width="13" height="1" fill="#A4A4AC"/><rect x="0" y="2" width="13" height="9" fill="#D9A31E"/><rect x="1" y="3" width="11" height="1" fill="#FFF2AC"/><rect x="1" y="4" width="11" height="1" fill="#FFEB85"/><rect x="1" y="5" width="11" height="1" fill="#FFE35A"/><rect x="1" y="6" width="11" height="1" fill="#FFE35A"/><rect x="1" y="7" width="11" height="1" fill="#FFE676"/><rect x="1" y="8" width="11" height="1" fill="#FFEE95"/><rect x="1" y="9" width="11" height="1" fill="#FFF3AA"/><rect x="2" y="0" width="3" height="1" fill="#D9A31E"/><rect x="1" y="1" width="5" height="1" fill="#D9A31E"/><rect x="2" y="1" width="3" height="2" fill="#FFF7CC"/></svg>
<div class="dh" style="left:52px;top:127px;width:12px"></div>
<svg class="a" style="left:48px;top:123px" width="9" height="9"><rect x="0.5" y="0.5" width="8" height="8" rx="1" fill="#FFFFFF" stroke="#8E8F8F"/><rect x="1" y="5" width="7" height="3" fill="#E6E6E6"/><rect x="2" y="4" width="5" height="1" fill="#3F5AA8"/></svg>
<svg class="a" style="left:64px;top:120px" width="15" height="13" shape-rendering="crispEdges"><rect x="13" y="3" width="1" height="9" fill="#A4A4AC"/><rect x="1" y="11" width="13" height="1" fill="#A4A4AC"/><rect x="0" y="2" width="13" height="9" fill="#D9A31E"/><rect x="1" y="3" width="11" height="1" fill="#FFF2AC"/><rect x="1" y="4" width="11" height="1" fill="#FFEB85"/><rect x="1" y="5" width="11" height="1" fill="#FFE35A"/><rect x="1" y="6" width="11" height="1" fill="#FFE35A"/><rect x="1" y="7" width="11" height="1" fill="#FFE676"/><rect x="1" y="8" width="11" height="1" fill="#FFEE95"/><rect x="1" y="9" width="11" height="1" fill="#FFF3AA"/><rect x="2" y="0" width="3" height="1" fill="#D9A31E"/><rect x="1" y="1" width="5" height="1" fill="#D9A31E"/><rect x="2" y="1" width="3" height="2" fill="#FFF7CC"/></svg>
<div class="dh" style="left:71px;top:145px;width:12px"></div>
<svg class="a" style="left:82px;top:137px" width="18" height="17"><rect x="0.5" y="0.5" width="14" height="15" rx="2.5" fill="#B0D2E5" stroke="#9FC6DB"/><path d="M1 2.5Q1 1 2.5 1H12L1 12Z" fill="#D2E7F2" opacity="0.7"/><path d="M3.5 1.5v10M6.5 1.5v10M9.5 1.5v10M12 1.5v8" stroke="#F4FAFD" stroke-width="1.1"/><path d="M2.2 2v10M5 1.5v10M8 1.5v10M11 1.5v9" stroke="#86B3CD" stroke-width="0.8"/><path d="M5.5 13.5 L13.8 5.2" stroke="#700000" stroke-width="3.4"/><path d="M5.5 13.5 L13.8 5.2" stroke="#FF1818" stroke-width="2.1"/><path d="M4.2 14.8 L6.8 12.2" stroke="#EDEDED" stroke-width="2.6"/><path d="M13.5 5.5 L16 3" stroke="#FF00FF" stroke-width="2.8"/><path d="M13.6 3 L14.8 1.8" stroke="#A00000" stroke-width="1.4"/><path d="M2.6 16.4 L4.4 14.6" stroke="#000" stroke-width="1.5"/></svg>
<div class="a" style="left:101px;top:135px;width:107px;height:18px;background:#000"><div style="width:107px;height:18px;background:#0078D7;background-clip:padding-box;border:1px dotted #FF8728"></div></div>
<div class="dh" style="left:52px;top:163px;width:12px"></div>
<svg class="a" style="left:64px;top:156px" width="15" height="13" shape-rendering="crispEdges"><rect x="13" y="3" width="1" height="9" fill="#A4A4AC"/><rect x="1" y="11" width="13" height="1" fill="#A4A4AC"/><rect x="0" y="2" width="13" height="9" fill="#D9A31E"/><rect x="1" y="3" width="11" height="1" fill="#FFF2AC"/><rect x="1" y="4" width="11" height="1" fill="#FFEB85"/><rect x="1" y="5" width="11" height="1" fill="#FFE35A"/><rect x="1" y="6" width="11" height="1" fill="#FFE35A"/><rect x="1" y="7" width="11" height="1" fill="#FFE676"/><rect x="1" y="8" width="11" height="1" fill="#FFEE95"/><rect x="1" y="9" width="11" height="1" fill="#FFF3AA"/><rect x="2" y="0" width="3" height="1" fill="#D9A31E"/><rect x="1" y="1" width="5" height="1" fill="#D9A31E"/><rect x="2" y="1" width="3" height="2" fill="#FFF7CC"/></svg>
<div class="dh" style="left:33px;top:181px;width:12px"></div>
<svg class="a" style="left:29px;top:177px" width="9" height="9"><rect x="0.5" y="0.5" width="8" height="8" rx="1" fill="#FFFFFF" stroke="#8E8F8F"/><rect x="1" y="5" width="7" height="3" fill="#E6E6E6"/><rect x="2" y="4" width="5" height="1" fill="#3F5AA8"/></svg>
<svg class="a" style="left:45px;top:174px" width="15" height="13" shape-rendering="crispEdges"><rect x="13" y="3" width="1" height="9" fill="#A4A4AC"/><rect x="1" y="11" width="13" height="1" fill="#A4A4AC"/><rect x="0" y="2" width="13" height="9" fill="#D9A31E"/><rect x="1" y="3" width="11" height="1" fill="#FFF2AC"/><rect x="1" y="4" width="11" height="1" fill="#FFEB85"/><rect x="1" y="5" width="11" height="1" fill="#FFE35A"/><rect x="1" y="6" width="11" height="1" fill="#FFE35A"/><rect x="1" y="7" width="11" height="1" fill="#FFE676"/><rect x="1" y="8" width="11" height="1" fill="#FFEE95"/><rect x="1" y="9" width="11" height="1" fill="#FFF3AA"/><rect x="2" y="0" width="3" height="1" fill="#D9A31E"/><rect x="1" y="1" width="5" height="1" fill="#D9A31E"/><rect x="2" y="1" width="3" height="2" fill="#FFF7CC"/></svg>
<div class="dh" style="left:52px;top:199px;width:12px"></div>
<svg class="a" style="left:64px;top:192px" width="15" height="13" shape-rendering="crispEdges"><rect x="13" y="3" width="1" height="9" fill="#A4A4AC"/><rect x="1" y="11" width="13" height="1" fill="#A4A4AC"/><rect x="0" y="2" width="13" height="9" fill="#D9A31E"/><rect x="1" y="3" width="11" height="1" fill="#FFF2AC"/><rect x="1" y="4" width="11" height="1" fill="#FFEB85"/><rect x="1" y="5" width="11" height="1" fill="#FFE35A"/><rect x="1" y="6" width="11" height="1" fill="#FFE35A"/><rect x="1" y="7" width="11" height="1" fill="#FFE676"/><rect x="1" y="8" width="11" height="1" fill="#FFEE95"/><rect x="1" y="9" width="11" height="1" fill="#FFF3AA"/><rect x="2" y="0" width="3" height="1" fill="#D9A31E"/><rect x="1" y="1" width="5" height="1" fill="#D9A31E"/><rect x="2" y="1" width="3" height="2" fill="#FFF7CC"/></svg>
<div class="dh" style="left:52px;top:217px;width:12px"></div>
<svg class="a" style="left:64px;top:210px" width="15" height="13" shape-rendering="crispEdges"><rect x="13" y="3" width="1" height="9" fill="#A4A4AC"/><rect x="1" y="11" width="13" height="1" fill="#A4A4AC"/><rect x="0" y="2" width="13" height="9" fill="#D9A31E"/><rect x="1" y="3" width="11" height="1" fill="#FFF2AC"/><rect x="1" y="4" width="11" height="1" fill="#FFEB85"/><rect x="1" y="5" width="11" height="1" fill="#FFE35A"/><rect x="1" y="6" width="11" height="1" fill="#FFE35A"/><rect x="1" y="7" width="11" height="1" fill="#FFE676"/><rect x="1" y="8" width="11" height="1" fill="#FFEE95"/><rect x="1" y="9" width="11" height="1" fill="#FFF3AA"/><rect x="2" y="0" width="3" height="1" fill="#D9A31E"/><rect x="1" y="1" width="5" height="1" fill="#D9A31E"/><rect x="2" y="1" width="3" height="2" fill="#FFF7CC"/></svg>
<div class="dh" style="left:52px;top:235px;width:12px"></div>
<svg class="a" style="left:64px;top:228px" width="15" height="13" shape-rendering="crispEdges"><rect x="13" y="3" width="1" height="9" fill="#A4A4AC"/><rect x="1" y="11" width="13" height="1" fill="#A4A4AC"/><rect x="0" y="2" width="13" height="9" fill="#D9A31E"/><rect x="1" y="3" width="11" height="1" fill="#FFF2AC"/><rect x="1" y="4" width="11" height="1" fill="#FFEB85"/><rect x="1" y="5" width="11" height="1" fill="#FFE35A"/><rect x="1" y="6" width="11" height="1" fill="#FFE35A"/><rect x="1" y="7" width="11" height="1" fill="#FFE676"/><rect x="1" y="8" width="11" height="1" fill="#FFEE95"/><rect x="1" y="9" width="11" height="1" fill="#FFF3AA"/><rect x="2" y="0" width="3" height="1" fill="#D9A31E"/><rect x="1" y="1" width="5" height="1" fill="#D9A31E"/><rect x="2" y="1" width="3" height="2" fill="#FFF7CC"/></svg>
<div class="dh" style="left:52px;top:253px;width:12px"></div>
<svg class="a" style="left:64px;top:246px" width="15" height="13" shape-rendering="crispEdges"><rect x="13" y="3" width="1" height="9" fill="#A4A4AC"/><rect x="1" y="11" width="13" height="1" fill="#A4A4AC"/><rect x="0" y="2" width="13" height="9" fill="#D9A31E"/><rect x="1" y="3" width="11" height="1" fill="#FFF2AC"/><rect x="1" y="4" width="11" height="1" fill="#FFEB85"/><rect x="1" y="5" width="11" height="1" fill="#FFE35A"/><rect x="1" y="6" width="11" height="1" fill="#FFE35A"/><rect x="1" y="7" width="11" height="1" fill="#FFE676"/><rect x="1" y="8" width="11" height="1" fill="#FFEE95"/><rect x="1" y="9" width="11" height="1" fill="#FFF3AA"/><rect x="2" y="0" width="3" height="1" fill="#D9A31E"/><rect x="1" y="1" width="5" height="1" fill="#D9A31E"/><rect x="2" y="1" width="3" height="2" fill="#FFF7CC"/></svg>
<div class="dh" style="left:33px;top:271px;width:12px"></div>
<svg class="a" style="left:29px;top:267px" width="9" height="9"><rect x="0.5" y="0.5" width="8" height="8" rx="1" fill="#FFFFFF" stroke="#8E8F8F"/><rect x="1" y="5" width="7" height="3" fill="#E6E6E6"/><rect x="2" y="4" width="5" height="1" fill="#3F5AA8"/></svg>
<svg class="a" style="left:45px;top:264px" width="15" height="13" shape-rendering="crispEdges"><rect x="13" y="3" width="1" height="9" fill="#A4A4AC"/><rect x="1" y="11" width="13" height="1" fill="#A4A4AC"/><rect x="0" y="2" width="13" height="9" fill="#D9A31E"/><rect x="1" y="3" width="11" height="1" fill="#FFF2AC"/><rect x="1" y="4" width="11" height="1" fill="#FFEB85"/><rect x="1" y="5" width="11" height="1" fill="#FFE35A"/><rect x="1" y="6" width="11" height="1" fill="#FFE35A"/><rect x="1" y="7" width="11" height="1" fill="#FFE676"/><rect x="1" y="8" width="11" height="1" fill="#FFEE95"/><rect x="1" y="9" width="11" height="1" fill="#FFF3AA"/><rect x="2" y="0" width="3" height="1" fill="#D9A31E"/><rect x="1" y="1" width="5" height="1" fill="#D9A31E"/><rect x="2" y="1" width="3" height="2" fill="#FFF7CC"/></svg>
<div class="dh" style="left:52px;top:289px;width:12px"></div>
<svg class="a" style="left:64px;top:282px" width="15" height="13" shape-rendering="crispEdges"><rect x="13" y="3" width="1" height="9" fill="#A4A4AC"/><rect x="1" y="11" width="13" height="1" fill="#A4A4AC"/><rect x="0" y="2" width="13" height="9" fill="#D9A31E"/><rect x="1" y="3" width="11" height="1" fill="#FFF2AC"/><rect x="1" y="4" width="11" height="1" fill="#FFEB85"/><rect x="1" y="5" width="11" height="1" fill="#FFE35A"/><rect x="1" y="6" width="11" height="1" fill="#FFE35A"/><rect x="1" y="7" width="11" height="1" fill="#FFE676"/><rect x="1" y="8" width="11" height="1" fill="#FFEE95"/><rect x="1" y="9" width="11" height="1" fill="#FFF3AA"/><rect x="2" y="0" width="3" height="1" fill="#D9A31E"/><rect x="1" y="1" width="5" height="1" fill="#D9A31E"/><rect x="2" y="1" width="3" height="2" fill="#FFF7CC"/></svg>
<div class="dh" style="left:52px;top:307px;width:12px"></div>
<svg class="a" style="left:64px;top:300px" width="15" height="13" shape-rendering="crispEdges"><rect x="13" y="3" width="1" height="9" fill="#A4A4AC"/><rect x="1" y="11" width="13" height="1" fill="#A4A4AC"/><rect x="0" y="2" width="13" height="9" fill="#D9A31E"/><rect x="1" y="3" width="11" height="1" fill="#FFF2AC"/><rect x="1" y="4" width="11" height="1" fill="#FFEB85"/><rect x="1" y="5" width="11" height="1" fill="#FFE35A"/><rect x="1" y="6" width="11" height="1" fill="#FFE35A"/><rect x="1" y="7" width="11" height="1" fill="#FFE676"/><rect x="1" y="8" width="11" height="1" fill="#FFEE95"/><rect x="1" y="9" width="11" height="1" fill="#FFF3AA"/><rect x="2" y="0" width="3" height="1" fill="#D9A31E"/><rect x="1" y="1" width="5" height="1" fill="#D9A31E"/><rect x="2" y="1" width="3" height="2" fill="#FFF7CC"/></svg>
<div class="dh" style="left:33px;top:325px;width:12px"></div>
<svg class="a" style="left:29px;top:321px" width="9" height="9"><rect x="0.5" y="0.5" width="8" height="8" rx="1" fill="#FFFFFF" stroke="#8E8F8F"/><rect x="1" y="5" width="7" height="3" fill="#E6E6E6"/><rect x="2" y="4" width="5" height="1" fill="#3F5AA8"/></svg>
<svg class="a" style="left:45px;top:318px" width="15" height="13" shape-rendering="crispEdges"><rect x="13" y="3" width="1" height="9" fill="#A4A4AC"/><rect x="1" y="11" width="13" height="1" fill="#A4A4AC"/><rect x="0" y="2" width="13" height="9" fill="#D9A31E"/><rect x="1" y="3" width="11" height="1" fill="#FFF2AC"/><rect x="1" y="4" width="11" height="1" fill="#FFEB85"/><rect x="1" y="5" width="11" height="1" fill="#FFE35A"/><rect x="1" y="6" width="11" height="1" fill="#FFE35A"/><rect x="1" y="7" width="11" height="1" fill="#FFE676"/><rect x="1" y="8" width="11" height="1" fill="#FFEE95"/><rect x="1" y="9" width="11" height="1" fill="#FFF3AA"/><rect x="2" y="0" width="3" height="1" fill="#D9A31E"/><rect x="1" y="1" width="5" height="1" fill="#D9A31E"/><rect x="2" y="1" width="3" height="2" fill="#FFF7CC"/></svg>
<div class="dh" style="left:52px;top:343px;width:12px"></div>
<svg class="a" style="left:64px;top:336px" width="15" height="13" shape-rendering="crispEdges"><rect x="13" y="3" width="1" height="9" fill="#A4A4AC"/><rect x="1" y="11" width="13" height="1" fill="#A4A4AC"/><rect x="0" y="2" width="13" height="9" fill="#D9A31E"/><rect x="1" y="3" width="11" height="1" fill="#FFF2AC"/><rect x="1" y="4" width="11" height="1" fill="#FFEB85"/><rect x="1" y="5" width="11" height="1" fill="#FFE35A"/><rect x="1" y="6" width="11" height="1" fill="#FFE35A"/><rect x="1" y="7" width="11" height="1" fill="#FFE676"/><rect x="1" y="8" width="11" height="1" fill="#FFEE95"/><rect x="1" y="9" width="11" height="1" fill="#FFF3AA"/><rect x="2" y="0" width="3" height="1" fill="#D9A31E"/><rect x="1" y="1" width="5" height="1" fill="#D9A31E"/><rect x="2" y="1" width="3" height="2" fill="#FFF7CC"/></svg>
<div class="dh" style="left:52px;top:361px;width:12px"></div>
<svg class="a" style="left:64px;top:354px" width="15" height="13" shape-rendering="crispEdges"><rect x="13" y="3" width="1" height="9" fill="#A4A4AC"/><rect x="1" y="11" width="13" height="1" fill="#A4A4AC"/><rect x="0" y="2" width="13" height="9" fill="#D9A31E"/><rect x="1" y="3" width="11" height="1" fill="#FFF2AC"/><rect x="1" y="4" width="11" height="1" fill="#FFEB85"/><rect x="1" y="5" width="11" height="1" fill="#FFE35A"/><rect x="1" y="6" width="11" height="1" fill="#FFE35A"/><rect x="1" y="7" width="11" height="1" fill="#FFE676"/><rect x="1" y="8" width="11" height="1" fill="#FFEE95"/><rect x="1" y="9" width="11" height="1" fill="#FFF3AA"/><rect x="2" y="0" width="3" height="1" fill="#D9A31E"/><rect x="1" y="1" width="5" height="1" fill="#D9A31E"/><rect x="2" y="1" width="3" height="2" fill="#FFF7CC"/></svg>
<div class="dh" style="left:52px;top:379px;width:12px"></div>
<svg class="a" style="left:64px;top:372px" width="15" height="13" shape-rendering="crispEdges"><rect x="13" y="3" width="1" height="9" fill="#A4A4AC"/><rect x="1" y="11" width="13" height="1" fill="#A4A4AC"/><rect x="0" y="2" width="13" height="9" fill="#D9A31E"/><rect x="1" y="3" width="11" height="1" fill="#FFF2AC"/><rect x="1" y="4" width="11" height="1" fill="#FFEB85"/><rect x="1" y="5" width="11" height="1" fill="#FFE35A"/><rect x="1" y="6" width="11" height="1" fill="#FFE35A"/><rect x="1" y="7" width="11" height="1" fill="#FFE676"/><rect x="1" y="8" width="11" height="1" fill="#FFEE95"/><rect x="1" y="9" width="11" height="1" fill="#FFF3AA"/><rect x="2" y="0" width="3" height="1" fill="#D9A31E"/><rect x="1" y="1" width="5" height="1" fill="#D9A31E"/><rect x="2" y="1" width="3" height="2" fill="#FFF7CC"/></svg>
<div class="dh" style="left:33px;top:397px;width:12px"></div>
<svg class="a" style="left:29px;top:393px" width="9" height="9"><rect x="0.5" y="0.5" width="8" height="8" rx="1" fill="#FFFFFF" stroke="#8E8F8F"/><rect x="1" y="5" width="7" height="3" fill="#E6E6E6"/><rect x="2" y="4" width="5" height="1" fill="#3F5AA8"/></svg>
<svg class="a" style="left:45px;top:390px" width="15" height="13" shape-rendering="crispEdges"><rect x="13" y="3" width="1" height="9" fill="#A4A4AC"/><rect x="1" y="11" width="13" height="1" fill="#A4A4AC"/><rect x="0" y="2" width="13" height="9" fill="#D9A31E"/><rect x="1" y="3" width="11" height="1" fill="#FFF2AC"/><rect x="1" y="4" width="11" height="1" fill="#FFEB85"/><rect x="1" y="5" width="11" height="1" fill="#FFE35A"/><rect x="1" y="6" width="11" height="1" fill="#FFE35A"/><rect x="1" y="7" width="11" height="1" fill="#FFE676"/><rect x="1" y="8" width="11" height="1" fill="#FFEE95"/><rect x="1" y="9" width="11" height="1" fill="#FFF3AA"/><rect x="2" y="0" width="3" height="1" fill="#D9A31E"/><rect x="1" y="1" width="5" height="1" fill="#D9A31E"/><rect x="2" y="1" width="3" height="2" fill="#FFF7CC"/></svg>
<div class="dh" style="left:52px;top:415px;width:12px"></div>
<svg class="a" style="left:64px;top:408px" width="15" height="13" shape-rendering="crispEdges"><rect x="13" y="3" width="1" height="9" fill="#A4A4AC"/><rect x="1" y="11" width="13" height="1" fill="#A4A4AC"/><rect x="0" y="2" width="13" height="9" fill="#D9A31E"/><rect x="1" y="3" width="11" height="1" fill="#FFF2AC"/><rect x="1" y="4" width="11" height="1" fill="#FFEB85"/><rect x="1" y="5" width="11" height="1" fill="#FFE35A"/><rect x="1" y="6" width="11" height="1" fill="#FFE35A"/><rect x="1" y="7" width="11" height="1" fill="#FFE676"/><rect x="1" y="8" width="11" height="1" fill="#FFEE95"/><rect x="1" y="9" width="11" height="1" fill="#FFF3AA"/><rect x="2" y="0" width="3" height="1" fill="#D9A31E"/><rect x="1" y="1" width="5" height="1" fill="#D9A31E"/><rect x="2" y="1" width="3" height="2" fill="#FFF7CC"/></svg>
<div class="dh" style="left:52px;top:433px;width:12px"></div>
<svg class="a" style="left:64px;top:426px" width="15" height="13" shape-rendering="crispEdges"><rect x="13" y="3" width="1" height="9" fill="#A4A4AC"/><rect x="1" y="11" width="13" height="1" fill="#A4A4AC"/><rect x="0" y="2" width="13" height="9" fill="#D9A31E"/><rect x="1" y="3" width="11" height="1" fill="#FFF2AC"/><rect x="1" y="4" width="11" height="1" fill="#FFEB85"/><rect x="1" y="5" width="11" height="1" fill="#FFE35A"/><rect x="1" y="6" width="11" height="1" fill="#FFE35A"/><rect x="1" y="7" width="11" height="1" fill="#FFE676"/><rect x="1" y="8" width="11" height="1" fill="#FFEE95"/><rect x="1" y="9" width="11" height="1" fill="#FFF3AA"/><rect x="2" y="0" width="3" height="1" fill="#D9A31E"/><rect x="1" y="1" width="5" height="1" fill="#D9A31E"/><rect x="2" y="1" width="3" height="2" fill="#FFF7CC"/></svg>
<div class="dh" style="left:33px;top:451px;width:12px"></div>
<svg class="a" style="left:29px;top:447px" width="9" height="9"><rect x="0.5" y="0.5" width="8" height="8" rx="1" fill="#FFFFFF" stroke="#8E8F8F"/><rect x="1" y="5" width="7" height="3" fill="#E6E6E6"/><rect x="2" y="4" width="5" height="1" fill="#3F5AA8"/></svg>
<svg class="a" style="left:45px;top:444px" width="15" height="13" shape-rendering="crispEdges"><rect x="13" y="3" width="1" height="9" fill="#A4A4AC"/><rect x="1" y="11" width="13" height="1" fill="#A4A4AC"/><rect x="0" y="2" width="13" height="9" fill="#D9A31E"/><rect x="1" y="3" width="11" height="1" fill="#FFF2AC"/><rect x="1" y="4" width="11" height="1" fill="#FFEB85"/><rect x="1" y="5" width="11" height="1" fill="#FFE35A"/><rect x="1" y="6" width="11" height="1" fill="#FFE35A"/><rect x="1" y="7" width="11" height="1" fill="#FFE676"/><rect x="1" y="8" width="11" height="1" fill="#FFEE95"/><rect x="1" y="9" width="11" height="1" fill="#FFF3AA"/><rect x="2" y="0" width="3" height="1" fill="#D9A31E"/><rect x="1" y="1" width="5" height="1" fill="#D9A31E"/><rect x="2" y="1" width="3" height="2" fill="#FFF7CC"/></svg>
<div class="dh" style="left:52px;top:469px;width:12px"></div>
<svg class="a" style="left:64px;top:462px" width="15" height="13" shape-rendering="crispEdges"><rect x="13" y="3" width="1" height="9" fill="#A4A4AC"/><rect x="1" y="11" width="13" height="1" fill="#A4A4AC"/><rect x="0" y="2" width="13" height="9" fill="#D9A31E"/><rect x="1" y="3" width="11" height="1" fill="#FFF2AC"/><rect x="1" y="4" width="11" height="1" fill="#FFEB85"/><rect x="1" y="5" width="11" height="1" fill="#FFE35A"/><rect x="1" y="6" width="11" height="1" fill="#FFE35A"/><rect x="1" y="7" width="11" height="1" fill="#FFE676"/><rect x="1" y="8" width="11" height="1" fill="#FFEE95"/><rect x="1" y="9" width="11" height="1" fill="#FFF3AA"/><rect x="2" y="0" width="3" height="1" fill="#D9A31E"/><rect x="1" y="1" width="5" height="1" fill="#D9A31E"/><rect x="2" y="1" width="3" height="2" fill="#FFF7CC"/></svg>
<div class="dh" style="left:52px;top:487px;width:12px"></div>
<svg class="a" style="left:64px;top:480px" width="15" height="13" shape-rendering="crispEdges"><rect x="13" y="3" width="1" height="9" fill="#A4A4AC"/><rect x="1" y="11" width="13" height="1" fill="#A4A4AC"/><rect x="0" y="2" width="13" height="9" fill="#D9A31E"/><rect x="1" y="3" width="11" height="1" fill="#FFF2AC"/><rect x="1" y="4" width="11" height="1" fill="#FFEB85"/><rect x="1" y="5" width="11" height="1" fill="#FFE35A"/><rect x="1" y="6" width="11" height="1" fill="#FFE35A"/><rect x="1" y="7" width="11" height="1" fill="#FFE676"/><rect x="1" y="8" width="11" height="1" fill="#FFEE95"/><rect x="1" y="9" width="11" height="1" fill="#FFF3AA"/><rect x="2" y="0" width="3" height="1" fill="#D9A31E"/><rect x="1" y="1" width="5" height="1" fill="#D9A31E"/><rect x="2" y="1" width="3" height="2" fill="#FFF7CC"/></svg>
<div class="dh" style="left:52px;top:505px;width:12px"></div>
<svg class="a" style="left:64px;top:498px" width="15" height="13" shape-rendering="crispEdges"><rect x="13" y="3" width="1" height="9" fill="#A4A4AC"/><rect x="1" y="11" width="13" height="1" fill="#A4A4AC"/><rect x="0" y="2" width="13" height="9" fill="#D9A31E"/><rect x="1" y="3" width="11" height="1" fill="#FFF2AC"/><rect x="1" y="4" width="11" height="1" fill="#FFEB85"/><rect x="1" y="5" width="11" height="1" fill="#FFE35A"/><rect x="1" y="6" width="11" height="1" fill="#FFE35A"/><rect x="1" y="7" width="11" height="1" fill="#FFE676"/><rect x="1" y="8" width="11" height="1" fill="#FFEE95"/><rect x="1" y="9" width="11" height="1" fill="#FFF3AA"/><rect x="2" y="0" width="3" height="1" fill="#D9A31E"/><rect x="1" y="1" width="5" height="1" fill="#D9A31E"/><rect x="2" y="1" width="3" height="2" fill="#FFF7CC"/></svg>
<div class="a" style="left:312px;top:79px;width:596px;height:1px;background:#A0A0A0"></div>
<div class="a" style="left:312px;top:79px;width:1px;height:520px;background:#A0A0A0"></div>
<div class="a" style="left:313px;top:80px;width:594px;height:1px;background:#696969"></div>
<div class="a" style="left:313px;top:80px;width:1px;height:517px;background:#696969"></div>
<div class="a" style="left:314px;top:81px;width:593px;height:516px;background:#FFF"></div>
<div class="a" style="left:314px;top:81px;width:576px;height:16px;background:#F0F0F0;"></div>
<div class="a" style="left:890px;top:81px;width:1px;height:516px;background:#FFFFFF;"></div>
<div class="a" style="left:314px;top:81px;width:8px;height:1px;background:#FFFFFF;"></div>
<div class="a" style="left:314px;top:81px;width:1px;height:17px;background:#FFFFFF;"></div>
<div class="a" style="left:321px;top:81px;width:1px;height:17px;background:#A0A0A0;"></div>
<div class="a" style="left:315px;top:97px;width:7px;height:1px;background:#A0A0A0;"></div>
<div class="a" style="left:322px;top:81px;width:141px;height:1px;background:#FFFFFF;"></div>
<div class="a" style="left:322px;top:81px;width:1px;height:17px;background:#FFFFFF;"></div>
<div class="a" style="left:462px;top:81px;width:1px;height:17px;background:#A0A0A0;"></div>
<div class="a" style="left:323px;top:97px;width:140px;height:1px;background:#A0A0A0;"></div>
<div class="a" style="left:463px;top:81px;width:141px;height:1px;background:#FFFFFF;"></div>
<div class="a" style="left:463px;top:81px;width:1px;height:17px;background:#FFFFFF;"></div>
<div class="a" style="left:603px;top:81px;width:1px;height:17px;background:#A0A0A0;"></div>
<div class="a" style="left:464px;top:97px;width:140px;height:1px;background:#A0A0A0;"></div>
<div class="a" style="left:604px;top:81px;width:141px;height:1px;background:#FFFFFF;"></div>
<div class="a" style="left:604px;top:81px;width:1px;height:17px;background:#FFFFFF;"></div>
<div class="a" style="left:744px;top:81px;width:1px;height:17px;background:#A0A0A0;"></div>
<div class="a" style="left:605px;top:97px;width:140px;height:1px;background:#A0A0A0;"></div>
<div class="a" style="left:745px;top:81px;width:141px;height:1px;background:#FFFFFF;"></div>
<div class="a" style="left:745px;top:81px;width:1px;height:17px;background:#FFFFFF;"></div>
<div class="a" style="left:885px;top:81px;width:1px;height:17px;background:#A0A0A0;"></div>
<div class="a" style="left:746px;top:97px;width:140px;height:1px;background:#A0A0A0;"></div>
<div class="a" style="left:314px;top:98px;width:8px;height:499px;background:#F0F0F0;"></div>
<div class="a" style="left:314px;top:98px;width:1px;height:499px;background:#FFFFFF;"></div>
<div class="a" style="left:321px;top:98px;width:1px;height:499px;background:#A0A0A0;"></div>
<div class="a" style="left:462px;top:98px;width:1px;height:499px;background:#D9D9D9;"></div>
<div class="a" style="left:603px;top:98px;width:1px;height:499px;background:#D9D9D9;"></div>
<div class="a" style="left:744px;top:98px;width:1px;height:499px;background:#D9D9D9;"></div>
<div class="a" style="left:885px;top:98px;width:1px;height:499px;background:#D9D9D9;"></div>
<div class="a" style="left:322px;top:114px;width:563px;height:1px;background:#D9D9D9;"></div>
<div class="a" style="left:315px;top:114px;width:6px;height:1px;background:#A0A0A0;"></div>
<div class="a" style="left:322px;top:131px;width:563px;height:1px;background:#D9D9D9;"></div>
<div class="a" style="left:315px;top:131px;width:6px;height:1px;background:#A0A0A0;"></div>
<div class="a" style="left:322px;top:148px;width:563px;height:1px;background:#D9D9D9;"></div>
<div class="a" style="left:315px;top:148px;width:6px;height:1px;background:#A0A0A0;"></div>
<div class="a" style="left:322px;top:165px;width:563px;height:1px;background:#D9D9D9;"></div>
<div class="a" style="left:315px;top:165px;width:6px;height:1px;background:#A0A0A0;"></div>
<div class="a" style="left:322px;top:182px;width:563px;height:1px;background:#D9D9D9;"></div>
<div class="a" style="left:315px;top:182px;width:6px;height:1px;background:#A0A0A0;"></div>
<div class="a" style="left:322px;top:199px;width:563px;height:1px;background:#D9D9D9;"></div>
<div class="a" style="left:315px;top:199px;width:6px;height:1px;background:#A0A0A0;"></div>
<div class="a" style="left:322px;top:216px;width:563px;height:1px;background:#D9D9D9;"></div>
<div class="a" style="left:315px;top:216px;width:6px;height:1px;background:#A0A0A0;"></div>
<div class="a" style="left:322px;top:233px;width:563px;height:1px;background:#D9D9D9;"></div>
<div class="a" style="left:315px;top:233px;width:6px;height:1px;background:#A0A0A0;"></div>
<div class="a" style="left:322px;top:250px;width:563px;height:1px;background:#D9D9D9;"></div>
<div class="a" style="left:315px;top:250px;width:6px;height:1px;background:#A0A0A0;"></div>
<div class="a" style="left:322px;top:267px;width:563px;height:1px;background:#D9D9D9;"></div>
<div class="a" style="left:315px;top:267px;width:6px;height:1px;background:#A0A0A0;"></div>
<div class="a" style="left:322px;top:284px;width:563px;height:1px;background:#D9D9D9;"></div>
<div class="a" style="left:315px;top:284px;width:6px;height:1px;background:#A0A0A0;"></div>
<div class="a" style="left:322px;top:301px;width:563px;height:1px;background:#D9D9D9;"></div>
<div class="a" style="left:315px;top:301px;width:6px;height:1px;background:#A0A0A0;"></div>
<div class="a" style="left:322px;top:318px;width:563px;height:1px;background:#D9D9D9;"></div>
<div class="a" style="left:315px;top:318px;width:6px;height:1px;background:#A0A0A0;"></div>
<div class="a" style="left:322px;top:335px;width:563px;height:1px;background:#D9D9D9;"></div>
<div class="a" style="left:315px;top:335px;width:6px;height:1px;background:#A0A0A0;"></div>
<div class="a" style="left:322px;top:352px;width:563px;height:1px;background:#D9D9D9;"></div>
<div class="a" style="left:315px;top:352px;width:6px;height:1px;background:#A0A0A0;"></div>
<div class="a" style="left:322px;top:369px;width:563px;height:1px;background:#D9D9D9;"></div>
<div class="a" style="left:315px;top:369px;width:6px;height:1px;background:#A0A0A0;"></div>
<div class="a" style="left:322px;top:386px;width:563px;height:1px;background:#D9D9D9;"></div>
<div class="a" style="left:315px;top:386px;width:6px;height:1px;background:#A0A0A0;"></div>
<div class="a" style="left:322px;top:403px;width:563px;height:1px;background:#D9D9D9;"></div>
<div class="a" style="left:315px;top:403px;width:6px;height:1px;background:#A0A0A0;"></div>
<div class="a" style="left:322px;top:420px;width:563px;height:1px;background:#D9D9D9;"></div>
<div class="a" style="left:315px;top:420px;width:6px;height:1px;background:#A0A0A0;"></div>
<div class="a" style="left:322px;top:437px;width:563px;height:1px;background:#D9D9D9;"></div>
<div class="a" style="left:315px;top:437px;width:6px;height:1px;background:#A0A0A0;"></div>
<div class="a" style="left:322px;top:454px;width:563px;height:1px;background:#D9D9D9;"></div>
<div class="a" style="left:315px;top:454px;width:6px;height:1px;background:#A0A0A0;"></div>
<div class="a" style="left:322px;top:471px;width:563px;height:1px;background:#D9D9D9;"></div>
<div class="a" style="left:315px;top:471px;width:6px;height:1px;background:#A0A0A0;"></div>
<div class="a" style="left:322px;top:488px;width:563px;height:1px;background:#D9D9D9;"></div>
<div class="a" style="left:315px;top:488px;width:6px;height:1px;background:#A0A0A0;"></div>
<div class="a" style="left:322px;top:505px;width:563px;height:1px;background:#D9D9D9;"></div>
<div class="a" style="left:315px;top:505px;width:6px;height:1px;background:#A0A0A0;"></div>
<div class="a" style="left:322px;top:522px;width:563px;height:1px;background:#D9D9D9;"></div>
<div class="a" style="left:315px;top:522px;width:6px;height:1px;background:#A0A0A0;"></div>
<div class="a" style="left:322px;top:539px;width:563px;height:1px;background:#D9D9D9;"></div>
<div class="a" style="left:315px;top:539px;width:6px;height:1px;background:#A0A0A0;"></div>
<div class="a" style="left:322px;top:556px;width:563px;height:1px;background:#D9D9D9;"></div>
<div class="a" style="left:315px;top:556px;width:6px;height:1px;background:#A0A0A0;"></div>
<div class="a" style="left:322px;top:573px;width:563px;height:1px;background:#D9D9D9;"></div>
<div class="a" style="left:315px;top:573px;width:6px;height:1px;background:#A0A0A0;"></div>
<div class="a" style="left:322px;top:590px;width:563px;height:1px;background:#D9D9D9;"></div>
<div class="a" style="left:315px;top:590px;width:6px;height:1px;background:#A0A0A0;"></div>
<div class="a" style="left:891px;top:81px;width:17px;height:516px;background:#F0F0F0;"></div>
<div class="a" style="left:891px;top:98px;width:15px;height:17px;background:#CDCDCD;"></div>
<svg class="a" style="left:0;top:0" width="910" height="619"><path d="M895.3 92.6L898.5 88.2L901.7 92.6" stroke="#606060" stroke-width="2.1" fill="none"/><path d="M895.3 586.4L898.5 590.8L901.7 586.4" stroke="#606060" stroke-width="2.1" fill="none"/></svg>
<div class="t" style="left:30px;top:9px;font-size:12px;line-height:15px;letter-spacing:-0.081px;">Таблицы ввода</div>
<div class="t" style="left:7px;top:58px;font-size:12px;line-height:15px;letter-spacing:-0.658px;">Создать</div>
<div class="t" style="left:61px;top:58px;font-size:12px;line-height:15px;letter-spacing:-0.344px;">Отмена</div>
<div class="t" style="left:113px;top:58px;font-size:12px;line-height:15px;letter-spacing:-0.021px;">Повтор</div>
<div class="t" style="left:166px;top:58px;font-size:12px;line-height:15px;letter-spacing:0.147px;">Поиск</div>
<div class="t" style="left:212px;top:58px;font-size:12px;line-height:15px;letter-spacing:-0.078px;">Строки</div>
<div class="t" style="left:263px;top:58px;font-size:12px;line-height:15px;letter-spacing:-0.062px;">Копировать</div>
<div class="t" style="left:338px;top:58px;font-size:12px;line-height:15px;letter-spacing:-0.422px;">Вырезать</div>
<div class="t" style="left:400px;top:58px;font-size:12px;line-height:15px;letter-spacing:-0.359px;">Вставить</div>
<div class="t" style="left:459px;top:58px;font-size:12px;line-height:15px;letter-spacing:-0.031px;">Очистить</div>
<div class="t" style="left:522px;top:58px;font-size:12px;line-height:15px;letter-spacing:0.105px;">Фото</div>
<div class="t" style="left:561px;top:58px;font-size:12px;line-height:15px;letter-spacing:-0.097px;">Шрифт</div>
<div class="t" style="left:611px;top:58px;font-size:12px;line-height:15px;letter-spacing:-0.027px;">Копировать в</div>
<div class="t" style="left:697px;top:58px;font-size:12px;line-height:15px;letter-spacing:-0.250px;">Найти</div>
<div class="t" style="left:742px;top:58px;font-size:12px;line-height:15px;letter-spacing:-0.451px;">На схему</div>
<div class="t" style="left:806px;top:58px;font-size:12px;line-height:15px;letter-spacing:0.109px;">Применить</div>
<div class="t" style="left:46px;top:83px;font-size:12px;line-height:15px;letter-spacing:-0.213px;">Все таблицы ввода</div>
<div class="t" style="left:65px;top:101px;font-size:12px;line-height:15px;letter-spacing:-0.019px;">Геометрия расчетной модели</div>
<div class="t" style="left:84px;top:119px;font-size:12px;line-height:15px;letter-spacing:-0.238px;">Узлы</div>
<div class="t" style="left:103px;top:137px;font-size:12px;line-height:15px;letter-spacing:-0.031px;color:#FFF">Координаты узлов</div>
<div class="t" style="left:84px;top:155px;font-size:12px;line-height:15px;letter-spacing:-0.322px;">Элементы</div>
<div class="t" style="left:65px;top:173px;font-size:12px;line-height:15px;letter-spacing:-0.109px;">Таблицы РСУ/РСН</div>
<div class="t" style="left:84px;top:191px;font-size:12px;line-height:15px;letter-spacing:-0.589px;">РСУ</div>
<div class="t" style="left:84px;top:209px;font-size:12px;line-height:15px;letter-spacing:-0.734px;">РСН</div>
<div class="t" style="left:84px;top:227px;font-size:12px;line-height:15px;letter-spacing:-0.202px;">РСН для анализа перемещений</div>
<div class="t" style="left:84px;top:245px;font-size:12px;line-height:15px;letter-spacing:-0.101px;">Таблица динамических воздействий</div>
<div class="t" style="left:65px;top:263px;font-size:12px;line-height:15px;letter-spacing:0.018px;">Жесткости и упругое основание</div>
<div class="t" style="left:84px;top:281px;font-size:12px;line-height:15px;letter-spacing:-0.153px;">Жесткости</div>
<div class="t" style="left:84px;top:299px;font-size:12px;line-height:15px;letter-spacing:0.070px;">Упругое основание</div>
<div class="t" style="left:65px;top:317px;font-size:12px;line-height:15px;letter-spacing:-0.004px;">Материалы конструирования</div>
<div class="t" style="left:84px;top:335px;font-size:12px;line-height:15px;letter-spacing:0.208px;">Ж/б конструкции</div>
<div class="t" style="left:84px;top:353px;font-size:12px;line-height:15px;letter-spacing:0.027px;">Стальные конструкции</div>
<div class="t" style="left:84px;top:371px;font-size:12px;line-height:15px;letter-spacing:0.173px;">Армокаменные конструкции</div>
<div class="t" style="left:65px;top:389px;font-size:12px;line-height:15px;letter-spacing:-0.128px;">Результаты расчета</div>
<div class="t" style="left:84px;top:407px;font-size:12px;line-height:15px;letter-spacing:0.017px;">Перемещения</div>
<div class="t" style="left:84px;top:425px;font-size:12px;line-height:15px;letter-spacing:0.044px;">Усилия</div>
<div class="t" style="left:65px;top:443px;font-size:12px;line-height:15px;letter-spacing:0.047px;">Конструирование</div>
<div class="t" style="left:84px;top:461px;font-size:12px;line-height:15px;letter-spacing:0.036px;">Подобранная арматура ж/б</div>
<div class="t" style="left:84px;top:479px;font-size:12px;line-height:15px;letter-spacing:0.007px;">Подобранные сечения</div>
<div class="t" style="left:84px;top:497px;font-size:12px;line-height:15px;letter-spacing:0.042px;">Армирование кладки</div>
<div class="t" style="left:326px;top:84px;font-size:11px;line-height:13px;letter-spacing:0.383px;">Узел</div>
<div class="t" style="left:467px;top:84px;font-size:11px;line-height:13px;letter-spacing:0.176px;">Коорд. X, м</div>
<div class="t" style="left:608px;top:84px;font-size:11px;line-height:13px;letter-spacing:0.305px;">Коорд. Y, м</div>
<div class="t" style="left:749px;top:84px;font-size:11px;line-height:13px;letter-spacing:0.292px;">Коорд. Z., м</div>
<div class="t" style="left:326px;top:100px;font-size:11px;line-height:13px;">1</div>
<div class="t" style="left:467px;top:100px;font-size:11px;line-height:13px;">0</div>
<div class="t" style="left:608px;top:100px;font-size:11px;line-height:13px;">24</div>
<div class="t" style="left:749px;top:100px;font-size:11px;line-height:13px;">15.35</div>
<div class="t" style="left:326px;top:117px;font-size:11px;line-height:13px;">2</div>
<div class="t" style="left:467px;top:117px;font-size:11px;line-height:13px;">0</div>
<div class="t" style="left:608px;top:117px;font-size:11px;line-height:13px;">12</div>
<div class="t" style="left:749px;top:117px;font-size:11px;line-height:13px;">15.35</div>
<div class="t" style="left:326px;top:134px;font-size:11px;line-height:13px;">3</div>
<div class="t" style="left:467px;top:134px;font-size:11px;line-height:13px;">0</div>
<div class="t" style="left:608px;top:134px;font-size:11px;line-height:13px;">0</div>
<div class="t" style="left:749px;top:134px;font-size:11px;line-height:13px;">15.35</div>
<div class="t" style="left:326px;top:151px;font-size:11px;line-height:13px;">4</div>
<div class="t" style="left:467px;top:151px;font-size:11px;line-height:13px;">8</div>
<div class="t" style="left:608px;top:151px;font-size:11px;line-height:13px;">24</div>
<div class="t" style="left:749px;top:151px;font-size:11px;line-height:13px;">15.35</div>
<div class="t" style="left:326px;top:168px;font-size:11px;line-height:13px;">5</div>
<div class="t" style="left:467px;top:168px;font-size:11px;line-height:13px;">16.765</div>
<div class="t" style="left:608px;top:168px;font-size:11px;line-height:13px;">12</div>
<div class="t" style="left:749px;top:168px;font-size:11px;line-height:13px;">15.35</div>
<div class="t" style="left:326px;top:185px;font-size:11px;line-height:13px;">6</div>
<div class="t" style="left:467px;top:185px;font-size:11px;line-height:13px;">8</div>
<div class="t" style="left:608px;top:185px;font-size:11px;line-height:13px;">0</div>
<div class="t" style="left:749px;top:185px;font-size:11px;line-height:13px;">15.35</div>
<div class="t" style="left:326px;top:202px;font-size:11px;line-height:13px;">7</div>
<div class="t" style="left:467px;top:202px;font-size:11px;line-height:13px;">16</div>
<div class="t" style="left:608px;top:202px;font-size:11px;line-height:13px;">0</div>
<div class="t" style="left:749px;top:202px;font-size:11px;line-height:13px;">15.35</div>
<div class="t" style="left:326px;top:219px;font-size:11px;line-height:13px;">8</div>
<div class="t" style="left:467px;top:219px;font-size:11px;line-height:13px;">8</div>
<div class="t" style="left:608px;top:219px;font-size:11px;line-height:13px;">12</div>
<div class="t" style="left:749px;top:219px;font-size:11px;line-height:13px;">15.35</div>
<div class="t" style="left:326px;top:236px;font-size:11px;line-height:13px;">9</div>
<div class="t" style="left:467px;top:236px;font-size:11px;line-height:13px;">26.98471</div>
<div class="t" style="left:608px;top:236px;font-size:11px;line-height:13px;">22.78895</div>
<div class="t" style="left:749px;top:236px;font-size:11px;line-height:13px;">15.35</div>
<div class="t" style="left:326px;top:253px;font-size:11px;line-height:13px;">10</div>
<div class="t" style="left:467px;top:253px;font-size:11px;line-height:13px;">34.91986</div>
<div class="t" style="left:608px;top:253px;font-size:11px;line-height:13px;">21.77243</div>
<div class="t" style="left:749px;top:253px;font-size:11px;line-height:13px;">15.35</div>
<div class="t" style="left:326px;top:270px;font-size:11px;line-height:13px;">11</div>
<div class="t" style="left:467px;top:270px;font-size:11px;line-height:13px;">42.85502</div>
<div class="t" style="left:608px;top:270px;font-size:11px;line-height:13px;">20.75592</div>
<div class="t" style="left:749px;top:270px;font-size:11px;line-height:13px;">15.35</div>
<div class="t" style="left:326px;top:287px;font-size:11px;line-height:13px;">12</div>
<div class="t" style="left:467px;top:287px;font-size:11px;line-height:13px;">61.53196</div>
<div class="t" style="left:608px;top:287px;font-size:11px;line-height:13px;">17.1424</div>
<div class="t" style="left:749px;top:287px;font-size:11px;line-height:13px;">15.35</div>
<div class="t" style="left:326px;top:304px;font-size:11px;line-height:13px;">13</div>
<div class="t" style="left:467px;top:304px;font-size:11px;line-height:13px;">69.27363</div>
<div class="t" style="left:608px;top:304px;font-size:11px;line-height:13px;">15.12584</div>
<div class="t" style="left:749px;top:304px;font-size:11px;line-height:13px;">15.35</div>
<div class="t" style="left:326px;top:321px;font-size:11px;line-height:13px;">14</div>
<div class="t" style="left:467px;top:321px;font-size:11px;line-height:13px;">77.0153</div>
<div class="t" style="left:608px;top:321px;font-size:11px;line-height:13px;">13.10929</div>
<div class="t" style="left:749px;top:321px;font-size:11px;line-height:13px;">15.35</div>
<div class="t" style="left:326px;top:338px;font-size:11px;line-height:13px;">15</div>
<div class="t" style="left:467px;top:338px;font-size:11px;line-height:13px;">95.08172</div>
<div class="t" style="left:608px;top:338px;font-size:11px;line-height:13px;">7.15188</div>
<div class="t" style="left:749px;top:338px;font-size:11px;line-height:13px;">15.35</div>
<div class="t" style="left:326px;top:355px;font-size:11px;line-height:13px;">16</div>
<div class="t" style="left:467px;top:355px;font-size:11px;line-height:13px;">102.50441</div>
<div class="t" style="left:608px;top:355px;font-size:11px;line-height:13px;">4.16798</div>
<div class="t" style="left:749px;top:355px;font-size:11px;line-height:13px;">15.35</div>
<div class="t" style="left:326px;top:372px;font-size:11px;line-height:13px;">17</div>
<div class="t" style="left:467px;top:372px;font-size:11px;line-height:13px;">109.9271</div>
<div class="t" style="left:608px;top:372px;font-size:11px;line-height:13px;">1.18407</div>
<div class="t" style="left:749px;top:372px;font-size:11px;line-height:13px;">15.35</div>
<div class="t" style="left:326px;top:389px;font-size:11px;line-height:13px;">18</div>
<div class="t" style="left:467px;top:389px;font-size:11px;line-height:13px;">25.45993</div>
<div class="t" style="left:608px;top:389px;font-size:11px;line-height:13px;">10.88622</div>
<div class="t" style="left:749px;top:389px;font-size:11px;line-height:13px;">15.35</div>
<div class="t" style="left:326px;top:406px;font-size:11px;line-height:13px;">19</div>
<div class="t" style="left:467px;top:406px;font-size:11px;line-height:13px;">33.39509</div>
<div class="t" style="left:608px;top:406px;font-size:11px;line-height:13px;">9.8697</div>
<div class="t" style="left:749px;top:406px;font-size:11px;line-height:13px;">15.35</div>
<div class="t" style="left:326px;top:423px;font-size:11px;line-height:13px;">20</div>
<div class="t" style="left:467px;top:423px;font-size:11px;line-height:13px;">41.33024</div>
<div class="t" style="left:608px;top:423px;font-size:11px;line-height:13px;">8.85318</div>
<div class="t" style="left:749px;top:423px;font-size:11px;line-height:13px;">15.35</div>
<div class="t" style="left:326px;top:440px;font-size:11px;line-height:13px;">21</div>
<div class="t" style="left:467px;top:440px;font-size:11px;line-height:13px;">58.50713</div>
<div class="t" style="left:608px;top:440px;font-size:11px;line-height:13px;">5.52989</div>
<div class="t" style="left:749px;top:440px;font-size:11px;line-height:13px;">15.35</div>
<div class="t" style="left:326px;top:457px;font-size:11px;line-height:13px;">22</div>
<div class="t" style="left:467px;top:457px;font-size:11px;line-height:13px;">66.2488</div>
<div class="t" style="left:608px;top:457px;font-size:11px;line-height:13px;">3.51333</div>
<div class="t" style="left:749px;top:457px;font-size:11px;line-height:13px;">15.35</div>
<div class="t" style="left:326px;top:474px;font-size:11px;line-height:13px;">23</div>
<div class="t" style="left:467px;top:474px;font-size:11px;line-height:13px;">73.99047</div>
<div class="t" style="left:608px;top:474px;font-size:11px;line-height:13px;">1.49678</div>
<div class="t" style="left:749px;top:474px;font-size:11px;line-height:13px;">15.35</div>
<div class="t" style="left:326px;top:491px;font-size:11px;line-height:13px;">24</div>
<div class="t" style="left:467px;top:491px;font-size:11px;line-height:13px;">90.60586</div>
<div class="t" style="left:608px;top:491px;font-size:11px;line-height:13px;">-3.98216</div>
<div class="t" style="left:749px;top:491px;font-size:11px;line-height:13px;">15.35</div>
<div class="t" style="left:326px;top:508px;font-size:11px;line-height:13px;">25</div>
<div class="t" style="left:467px;top:508px;font-size:11px;line-height:13px;">98.02855</div>
<div class="t" style="left:608px;top:508px;font-size:11px;line-height:13px;">-6.96606</div>
<div class="t" style="left:749px;top:508px;font-size:11px;line-height:13px;">15.35</div>
<div class="t" style="left:326px;top:525px;font-size:11px;line-height:13px;">26</div>
<div class="t" style="left:467px;top:525px;font-size:11px;line-height:13px;">23.93516</div>
<div class="t" style="left:608px;top:525px;font-size:11px;line-height:13px;">-1.01652</div>
<div class="t" style="left:749px;top:525px;font-size:11px;line-height:13px;">15.35</div>
<div class="t" style="left:326px;top:542px;font-size:11px;line-height:13px;">27</div>
<div class="t" style="left:467px;top:542px;font-size:11px;line-height:13px;">31.87031</div>
<div class="t" style="left:608px;top:542px;font-size:11px;line-height:13px;">-2.03303</div>
<div class="t" style="left:749px;top:542px;font-size:11px;line-height:13px;">15.35</div>
<div class="t" style="left:326px;top:559px;font-size:11px;line-height:13px;">28</div>
<div class="t" style="left:467px;top:559px;font-size:11px;line-height:13px;">39.80547</div>
<div class="t" style="left:608px;top:559px;font-size:11px;line-height:13px;">-3.04955</div>
<div class="t" style="left:749px;top:559px;font-size:11px;line-height:13px;">15.35</div>
<div class="t" style="left:326px;top:576px;font-size:11px;line-height:13px;">29</div>
<div class="t" style="left:467px;top:576px;font-size:11px;line-height:13px;">55.48229</div>
<div class="t" style="left:608px;top:576px;font-size:11px;line-height:13px;">-6.08262</div>
<div class="t" style="left:749px;top:576px;font-size:11px;line-height:13px;">15.35</div>
<div class="t" style="left:326px;top:593px;font-size:11px;line-height:13px;">30</div>
<div class="t" style="left:467px;top:593px;font-size:11px;line-height:13px;">63.22397</div>
<div class="t" style="left:608px;top:593px;font-size:11px;line-height:13px;">-9.09912</div>
<div class="t" style="left:749px;top:593px;font-size:11px;line-height:13px;">15.35</div>
<div class="t" style="left:3px;top:603px;font-size:12px;line-height:15px;">Успех. Содержимое таблицы ввода успешно применено к расчетной схеме</div>
<div class="a" style="left:312px;top:597px;width:596px;height:1px;background:#E3E3E3;"></div>
<div class="a" style="left:908px;top:79px;width:1px;height:520px;background:#FFF;"></div>
<div class="a" style="left:312px;top:598px;width:597px;height:1px;background:#FFF;"></div>
<div class="a" style="left:1px;top:599px;width:908px;height:19px;background:#F0F0F0"></div>
<div class="a" style="left:1px;top:599px;width:908px;height:1px;background:#D7D7D7"></div>
<div class="t" style="left:3px;top:603px;font-size:12px;line-height:15px">Успех. Содержимое таблицы ввода успешно применено к расчетной схеме</div>
<div class="a" style="left:905px;top:608px;width:2px;height:2px;background:#BDBDBD"></div>
<div class="a" style="left:902px;top:611px;width:2px;height:2px;background:#BDBDBD"></div>
<div class="a" style="left:905px;top:611px;width:2px;height:2px;background:#BDBDBD"></div>
<div class="a" style="left:899px;top:614px;width:2px;height:2px;background:#BDBDBD"></div>
<div class="a" style="left:902px;top:614px;width:2px;height:2px;background:#BDBDBD"></div>
<div class="a" style="left:905px;top:614px;width:2px;height:2px;background:#BDBDBD"></div>
<div class="a" style="left:0;top:618px;width:910px;height:1px;background:#00B7C3"></div>
<div class="a" style="left:909px;top:0;width:1px;height:619px;background:#00B7C3"></div>
</body></html>
